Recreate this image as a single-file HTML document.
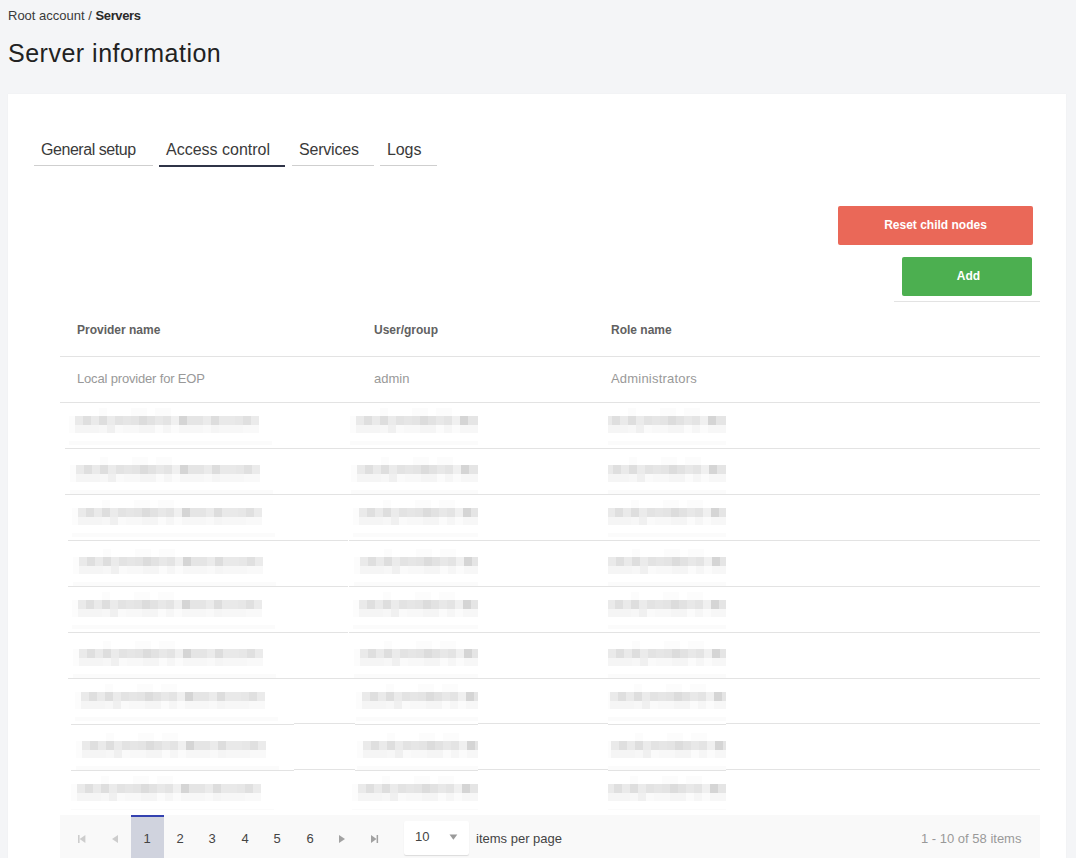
<!DOCTYPE html>
<html><head><meta charset="utf-8">
<style>
*{margin:0;padding:0;box-sizing:border-box}
html,body{width:1076px;height:858px;overflow:hidden;background:#f4f5f7;font-family:"Liberation Sans",sans-serif}
.a{position:absolute;white-space:nowrap}
i{position:absolute;display:block}
#card{position:absolute;left:8px;top:94px;width:1058px;height:800px;background:#fff;box-shadow:0 0 2px rgba(0,0,0,.035)}
.bc{left:8px;top:8px;font-size:13px;color:#3a3a3a}
.bc b{color:#2a2a2a}
.title{left:8px;top:39px;font-size:25px;letter-spacing:0.5px;color:#222}
.tab{font-size:16px;color:#3a3a3a;top:141px}
.ul{position:absolute;top:165px;height:1px;background:#cfcfcf}
.btn{position:absolute;border-radius:2px;color:#fff;font-size:12px;font-weight:bold;text-align:center}
.hl{position:absolute;height:1px;background:#e3e3e3}
.th{font-size:12px;font-weight:bold;color:#616161;top:323px}
.td{font-size:13px;color:#999;top:371px}
.pg{position:absolute;left:60px;top:815px;width:980px;height:50px;background:#f9f9f9}
.pn{font-size:13px;color:#444;top:831px;width:32px;text-align:center}
</style></head><body>
<div class="a bc">Root account / <b style="letter-spacing:-0.35px">Servers</b></div>
<div class="a title">Server information</div>
<div id="card"></div>
<div class="a tab" style="left:41px;letter-spacing:-0.45px">General setup</div>
<div class="a tab" style="left:166px">Access control</div>
<div class="a tab" style="left:299px;letter-spacing:-0.2px">Services</div>
<div class="a tab" style="left:387px;letter-spacing:-0.1px">Logs</div>
<i class="ul" style="left:34px;width:119px"></i>
<i class="ul" style="left:159px;width:126px;height:2px;background:#2f3447"></i>
<i class="ul" style="left:292px;width:82px"></i>
<i class="ul" style="left:380px;width:57px"></i>
<div class="btn" style="left:838px;top:206px;width:195px;height:39px;line-height:39px;background:#ea6858">Reset child nodes</div>
<div class="btn" style="left:902px;top:257px;width:130px;height:39px;line-height:39px;padding-left:3px;background:#4caf50">Add</div>
<i class="hl" style="left:894px;top:301px;width:146px"></i>
<div class="a th" style="left:77px">Provider name</div>
<div class="a th" style="left:374px">User/group</div>
<div class="a th" style="left:611px">Role name</div>
<i class="hl" style="left:60px;top:356px;width:980px"></i>
<div class="a td" style="left:77px;letter-spacing:-0.17px">Local provider for EOP</div>
<div class="a td" style="left:374px">admin</div>
<div class="a td" style="left:611px;letter-spacing:0.2px">Administrators</div>
<i class="hl" style="left:60px;top:402px;width:980px"></i>
<i class="hl" style="left:65px;top:448px;width:975px"></i>
<i class="hl" style="left:65px;top:494px;width:975px"></i>
<i class="hl" style="left:68px;top:540px;width:972px"></i>
<i class="hl" style="left:68px;top:586px;width:972px"></i>
<i class="hl" style="left:68px;top:632px;width:972px"></i>
<i class="hl" style="left:68px;top:678px;width:972px"></i>
<i class="hl" style="left:60px;top:723px;width:980px"></i><i style="left:60px;top:723px;width:234px;height:1px;background:#fff"></i><i style="left:355px;top:723px;width:123px;height:1px;background:#fff"></i><i style="left:608px;top:723px;width:118px;height:1px;background:#fff"></i><i class="hl" style="left:71px;top:724px;width:223px"></i><i class="hl" style="left:355px;top:724px;width:123px"></i><i class="hl" style="left:608px;top:724px;width:118px"></i>
<i class="hl" style="left:60px;top:769px;width:980px"></i><i style="left:60px;top:769px;width:234px;height:1px;background:#fff"></i><i style="left:355px;top:769px;width:123px;height:1px;background:#fff"></i><i style="left:608px;top:769px;width:118px;height:1px;background:#fff"></i><i class="hl" style="left:71px;top:770px;width:223px"></i><i class="hl" style="left:355px;top:770px;width:123px"></i><i class="hl" style="left:608px;top:770px;width:118px"></i>
<i style="left:75px;top:416px;width:8px;height:9px;background:#eaeaea"></i><i style="left:75px;top:425px;width:8px;height:8px;background:#f5f5f5"></i><i style="left:83px;top:416px;width:8px;height:9px;background:#dfdfdf"></i><i style="left:83px;top:425px;width:8px;height:8px;background:#f5f5f5"></i><i style="left:91px;top:416px;width:8px;height:9px;background:#eaeaea"></i><i style="left:91px;top:425px;width:8px;height:8px;background:#f5f5f5"></i><i style="left:99px;top:416px;width:8px;height:9px;background:#dedede"></i><i style="left:99px;top:425px;width:8px;height:8px;background:#f7f7f7"></i><i style="left:107px;top:416px;width:8px;height:9px;background:#ebebeb"></i><i style="left:107px;top:425px;width:8px;height:8px;background:#f0f0f0"></i><i style="left:115px;top:416px;width:8px;height:9px;background:#e3e3e3"></i><i style="left:115px;top:425px;width:8px;height:8px;background:#fafafa"></i><i style="left:123px;top:416px;width:8px;height:9px;background:#e6e6e6"></i><i style="left:123px;top:425px;width:8px;height:8px;background:#f8f8f8"></i><i style="left:131px;top:416px;width:8px;height:9px;background:#e4e4e4"></i><i style="left:131px;top:425px;width:8px;height:8px;background:#f8f8f8"></i><i style="left:139px;top:416px;width:8px;height:9px;background:#dcdcdc"></i><i style="left:139px;top:425px;width:8px;height:8px;background:#f5f5f5"></i><i style="left:147px;top:416px;width:8px;height:9px;background:#e2e2e2"></i><i style="left:147px;top:425px;width:8px;height:8px;background:#f5f5f5"></i><i style="left:155px;top:416px;width:8px;height:9px;background:#e8e8e8"></i><i style="left:155px;top:425px;width:8px;height:8px;background:#fbfbfb"></i><i style="left:163px;top:416px;width:8px;height:9px;background:#e4e4e4"></i><i style="left:163px;top:425px;width:8px;height:8px;background:#f6f6f6"></i><i style="left:171px;top:416px;width:8px;height:9px;background:#f0f0f0"></i><i style="left:171px;top:425px;width:8px;height:8px;background:#fbfbfb"></i><i style="left:179px;top:416px;width:8px;height:9px;background:#d5d5d5"></i><i style="left:179px;top:425px;width:8px;height:8px;background:#f7f7f7"></i><i style="left:187px;top:416px;width:8px;height:9px;background:#e5e5e5"></i><i style="left:187px;top:425px;width:8px;height:8px;background:#f7f7f7"></i><i style="left:195px;top:416px;width:8px;height:9px;background:#e5e5e5"></i><i style="left:195px;top:425px;width:8px;height:8px;background:#f7f7f7"></i><i style="left:203px;top:416px;width:8px;height:9px;background:#ebebeb"></i><i style="left:203px;top:425px;width:8px;height:8px;background:#f9f9f9"></i><i style="left:211px;top:416px;width:8px;height:9px;background:#dddddd"></i><i style="left:211px;top:425px;width:8px;height:8px;background:#f5f5f5"></i><i style="left:219px;top:416px;width:8px;height:9px;background:#e9e9e9"></i><i style="left:219px;top:425px;width:8px;height:8px;background:#f7f7f7"></i><i style="left:227px;top:416px;width:8px;height:9px;background:#e9e9e9"></i><i style="left:227px;top:425px;width:8px;height:8px;background:#f7f7f7"></i><i style="left:235px;top:416px;width:8px;height:9px;background:#e7e7e7"></i><i style="left:235px;top:425px;width:8px;height:8px;background:#f7f7f7"></i><i style="left:243px;top:416px;width:8px;height:9px;background:#e0e0e0"></i><i style="left:243px;top:425px;width:8px;height:8px;background:#f9f9f9"></i><i style="left:251px;top:416px;width:8px;height:9px;background:#ebebeb"></i><i style="left:251px;top:425px;width:8px;height:8px;background:#f9f9f9"></i><i style="left:99px;top:408px;width:8px;height:8px;background:#fcfcfc"></i><i style="left:131px;top:408px;width:8px;height:8px;background:#fcfcfc"></i><i style="left:139px;top:408px;width:8px;height:8px;background:#fcfcfc"></i><i style="left:155px;top:408px;width:8px;height:8px;background:#fcfcfc"></i><i style="left:163px;top:408px;width:8px;height:8px;background:#fcfcfc"></i><i style="left:69px;top:416px;width:6px;height:17px;background:#fcfcfc"></i><i style="left:69px;top:441px;width:203px;height:4px;background:#fbfbfb"></i><div style="position:absolute;left:348px;top:408px;width:130px;height:40px;overflow:hidden"><div style="position:absolute;left:-348px;top:-408px"><i style="left:356px;top:416px;width:8px;height:9px;background:#eaeaea"></i><i style="left:356px;top:425px;width:8px;height:8px;background:#f5f5f5"></i><i style="left:364px;top:416px;width:8px;height:9px;background:#dfdfdf"></i><i style="left:364px;top:425px;width:8px;height:8px;background:#f5f5f5"></i><i style="left:372px;top:416px;width:8px;height:9px;background:#eaeaea"></i><i style="left:372px;top:425px;width:8px;height:8px;background:#f5f5f5"></i><i style="left:380px;top:416px;width:8px;height:9px;background:#dedede"></i><i style="left:380px;top:425px;width:8px;height:8px;background:#f7f7f7"></i><i style="left:388px;top:416px;width:8px;height:9px;background:#ebebeb"></i><i style="left:388px;top:425px;width:8px;height:8px;background:#f0f0f0"></i><i style="left:396px;top:416px;width:8px;height:9px;background:#e3e3e3"></i><i style="left:396px;top:425px;width:8px;height:8px;background:#fafafa"></i><i style="left:404px;top:416px;width:8px;height:9px;background:#e6e6e6"></i><i style="left:404px;top:425px;width:8px;height:8px;background:#f8f8f8"></i><i style="left:412px;top:416px;width:8px;height:9px;background:#e4e4e4"></i><i style="left:412px;top:425px;width:8px;height:8px;background:#f8f8f8"></i><i style="left:420px;top:416px;width:8px;height:9px;background:#dcdcdc"></i><i style="left:420px;top:425px;width:8px;height:8px;background:#f5f5f5"></i><i style="left:428px;top:416px;width:8px;height:9px;background:#e2e2e2"></i><i style="left:428px;top:425px;width:8px;height:8px;background:#f5f5f5"></i><i style="left:436px;top:416px;width:8px;height:9px;background:#e8e8e8"></i><i style="left:436px;top:425px;width:8px;height:8px;background:#fbfbfb"></i><i style="left:444px;top:416px;width:8px;height:9px;background:#e4e4e4"></i><i style="left:444px;top:425px;width:8px;height:8px;background:#f6f6f6"></i><i style="left:452px;top:416px;width:8px;height:9px;background:#f0f0f0"></i><i style="left:452px;top:425px;width:8px;height:8px;background:#fbfbfb"></i><i style="left:460px;top:416px;width:8px;height:9px;background:#d5d5d5"></i><i style="left:460px;top:425px;width:8px;height:8px;background:#f7f7f7"></i><i style="left:468px;top:416px;width:8px;height:9px;background:#e5e5e5"></i><i style="left:468px;top:425px;width:8px;height:8px;background:#f7f7f7"></i><i style="left:476px;top:416px;width:8px;height:9px;background:#e5e5e5"></i><i style="left:476px;top:425px;width:8px;height:8px;background:#f7f7f7"></i><i style="left:380px;top:408px;width:8px;height:8px;background:#fcfcfc"></i><i style="left:412px;top:408px;width:8px;height:8px;background:#fcfcfc"></i><i style="left:420px;top:408px;width:8px;height:8px;background:#fcfcfc"></i><i style="left:436px;top:408px;width:8px;height:8px;background:#fcfcfc"></i><i style="left:444px;top:408px;width:8px;height:8px;background:#fcfcfc"></i><i style="left:350px;top:416px;width:6px;height:17px;background:#fcfcfc"></i><i style="left:350px;top:441px;width:200px;height:4px;background:#fbfbfb"></i></div></div><div style="position:absolute;left:608px;top:408px;width:118px;height:40px;overflow:hidden"><div style="position:absolute;left:-608px;top:-408px"><i style="left:604px;top:416px;width:8px;height:9px;background:#eaeaea"></i><i style="left:604px;top:425px;width:8px;height:8px;background:#f5f5f5"></i><i style="left:612px;top:416px;width:8px;height:9px;background:#dfdfdf"></i><i style="left:612px;top:425px;width:8px;height:8px;background:#f5f5f5"></i><i style="left:620px;top:416px;width:8px;height:9px;background:#eaeaea"></i><i style="left:620px;top:425px;width:8px;height:8px;background:#f5f5f5"></i><i style="left:628px;top:416px;width:8px;height:9px;background:#dedede"></i><i style="left:628px;top:425px;width:8px;height:8px;background:#f7f7f7"></i><i style="left:636px;top:416px;width:8px;height:9px;background:#ebebeb"></i><i style="left:636px;top:425px;width:8px;height:8px;background:#f0f0f0"></i><i style="left:644px;top:416px;width:8px;height:9px;background:#e3e3e3"></i><i style="left:644px;top:425px;width:8px;height:8px;background:#fafafa"></i><i style="left:652px;top:416px;width:8px;height:9px;background:#e6e6e6"></i><i style="left:652px;top:425px;width:8px;height:8px;background:#f8f8f8"></i><i style="left:660px;top:416px;width:8px;height:9px;background:#e4e4e4"></i><i style="left:660px;top:425px;width:8px;height:8px;background:#f8f8f8"></i><i style="left:668px;top:416px;width:8px;height:9px;background:#dcdcdc"></i><i style="left:668px;top:425px;width:8px;height:8px;background:#f5f5f5"></i><i style="left:676px;top:416px;width:8px;height:9px;background:#e2e2e2"></i><i style="left:676px;top:425px;width:8px;height:8px;background:#f5f5f5"></i><i style="left:684px;top:416px;width:8px;height:9px;background:#e8e8e8"></i><i style="left:684px;top:425px;width:8px;height:8px;background:#fbfbfb"></i><i style="left:692px;top:416px;width:8px;height:9px;background:#e4e4e4"></i><i style="left:692px;top:425px;width:8px;height:8px;background:#f6f6f6"></i><i style="left:700px;top:416px;width:8px;height:9px;background:#f0f0f0"></i><i style="left:700px;top:425px;width:8px;height:8px;background:#fbfbfb"></i><i style="left:708px;top:416px;width:8px;height:9px;background:#d5d5d5"></i><i style="left:708px;top:425px;width:8px;height:8px;background:#f7f7f7"></i><i style="left:716px;top:416px;width:8px;height:9px;background:#e5e5e5"></i><i style="left:716px;top:425px;width:8px;height:8px;background:#f7f7f7"></i><i style="left:724px;top:416px;width:8px;height:9px;background:#e5e5e5"></i><i style="left:724px;top:425px;width:8px;height:8px;background:#f7f7f7"></i><i style="left:628px;top:408px;width:8px;height:8px;background:#fcfcfc"></i><i style="left:660px;top:408px;width:8px;height:8px;background:#fcfcfc"></i><i style="left:668px;top:408px;width:8px;height:8px;background:#fcfcfc"></i><i style="left:684px;top:408px;width:8px;height:8px;background:#fcfcfc"></i><i style="left:692px;top:408px;width:8px;height:8px;background:#fcfcfc"></i><i style="left:598px;top:416px;width:6px;height:17px;background:#fcfcfc"></i><i style="left:598px;top:441px;width:200px;height:4px;background:#fbfbfb"></i></div></div><i style="left:76px;top:465px;width:8px;height:9px;background:#eaeaea"></i><i style="left:76px;top:474px;width:8px;height:8px;background:#f5f5f5"></i><i style="left:84px;top:465px;width:8px;height:9px;background:#dfdfdf"></i><i style="left:84px;top:474px;width:8px;height:8px;background:#f5f5f5"></i><i style="left:92px;top:465px;width:8px;height:9px;background:#eaeaea"></i><i style="left:92px;top:474px;width:8px;height:8px;background:#f5f5f5"></i><i style="left:100px;top:465px;width:8px;height:9px;background:#dedede"></i><i style="left:100px;top:474px;width:8px;height:8px;background:#f7f7f7"></i><i style="left:108px;top:465px;width:8px;height:9px;background:#ebebeb"></i><i style="left:108px;top:474px;width:8px;height:8px;background:#f0f0f0"></i><i style="left:116px;top:465px;width:8px;height:9px;background:#e3e3e3"></i><i style="left:116px;top:474px;width:8px;height:8px;background:#fafafa"></i><i style="left:124px;top:465px;width:8px;height:9px;background:#e6e6e6"></i><i style="left:124px;top:474px;width:8px;height:8px;background:#f8f8f8"></i><i style="left:132px;top:465px;width:8px;height:9px;background:#e4e4e4"></i><i style="left:132px;top:474px;width:8px;height:8px;background:#f8f8f8"></i><i style="left:140px;top:465px;width:8px;height:9px;background:#dcdcdc"></i><i style="left:140px;top:474px;width:8px;height:8px;background:#f5f5f5"></i><i style="left:148px;top:465px;width:8px;height:9px;background:#e2e2e2"></i><i style="left:148px;top:474px;width:8px;height:8px;background:#f5f5f5"></i><i style="left:156px;top:465px;width:8px;height:9px;background:#e8e8e8"></i><i style="left:156px;top:474px;width:8px;height:8px;background:#fbfbfb"></i><i style="left:164px;top:465px;width:8px;height:9px;background:#e4e4e4"></i><i style="left:164px;top:474px;width:8px;height:8px;background:#f6f6f6"></i><i style="left:172px;top:465px;width:8px;height:9px;background:#f0f0f0"></i><i style="left:172px;top:474px;width:8px;height:8px;background:#fbfbfb"></i><i style="left:180px;top:465px;width:8px;height:9px;background:#d5d5d5"></i><i style="left:180px;top:474px;width:8px;height:8px;background:#f7f7f7"></i><i style="left:188px;top:465px;width:8px;height:9px;background:#e5e5e5"></i><i style="left:188px;top:474px;width:8px;height:8px;background:#f7f7f7"></i><i style="left:196px;top:465px;width:8px;height:9px;background:#e5e5e5"></i><i style="left:196px;top:474px;width:8px;height:8px;background:#f7f7f7"></i><i style="left:204px;top:465px;width:8px;height:9px;background:#ebebeb"></i><i style="left:204px;top:474px;width:8px;height:8px;background:#f9f9f9"></i><i style="left:212px;top:465px;width:8px;height:9px;background:#dddddd"></i><i style="left:212px;top:474px;width:8px;height:8px;background:#f5f5f5"></i><i style="left:220px;top:465px;width:8px;height:9px;background:#e9e9e9"></i><i style="left:220px;top:474px;width:8px;height:8px;background:#f7f7f7"></i><i style="left:228px;top:465px;width:8px;height:9px;background:#e9e9e9"></i><i style="left:228px;top:474px;width:8px;height:8px;background:#f7f7f7"></i><i style="left:236px;top:465px;width:8px;height:9px;background:#e7e7e7"></i><i style="left:236px;top:474px;width:8px;height:8px;background:#f7f7f7"></i><i style="left:244px;top:465px;width:8px;height:9px;background:#e0e0e0"></i><i style="left:244px;top:474px;width:8px;height:8px;background:#f9f9f9"></i><i style="left:252px;top:465px;width:8px;height:9px;background:#ebebeb"></i><i style="left:252px;top:474px;width:8px;height:8px;background:#f9f9f9"></i><i style="left:100px;top:457px;width:8px;height:8px;background:#fcfcfc"></i><i style="left:132px;top:457px;width:8px;height:8px;background:#fcfcfc"></i><i style="left:140px;top:457px;width:8px;height:8px;background:#fcfcfc"></i><i style="left:156px;top:457px;width:8px;height:8px;background:#fcfcfc"></i><i style="left:164px;top:457px;width:8px;height:8px;background:#fcfcfc"></i><i style="left:70px;top:465px;width:6px;height:17px;background:#fcfcfc"></i><i style="left:70px;top:490px;width:203px;height:4px;background:#fbfbfb"></i><div style="position:absolute;left:349px;top:457px;width:129px;height:40px;overflow:hidden"><div style="position:absolute;left:-349px;top:-457px"><i style="left:357px;top:465px;width:8px;height:9px;background:#eaeaea"></i><i style="left:357px;top:474px;width:8px;height:8px;background:#f5f5f5"></i><i style="left:365px;top:465px;width:8px;height:9px;background:#dfdfdf"></i><i style="left:365px;top:474px;width:8px;height:8px;background:#f5f5f5"></i><i style="left:373px;top:465px;width:8px;height:9px;background:#eaeaea"></i><i style="left:373px;top:474px;width:8px;height:8px;background:#f5f5f5"></i><i style="left:381px;top:465px;width:8px;height:9px;background:#dedede"></i><i style="left:381px;top:474px;width:8px;height:8px;background:#f7f7f7"></i><i style="left:389px;top:465px;width:8px;height:9px;background:#ebebeb"></i><i style="left:389px;top:474px;width:8px;height:8px;background:#f0f0f0"></i><i style="left:397px;top:465px;width:8px;height:9px;background:#e3e3e3"></i><i style="left:397px;top:474px;width:8px;height:8px;background:#fafafa"></i><i style="left:405px;top:465px;width:8px;height:9px;background:#e6e6e6"></i><i style="left:405px;top:474px;width:8px;height:8px;background:#f8f8f8"></i><i style="left:413px;top:465px;width:8px;height:9px;background:#e4e4e4"></i><i style="left:413px;top:474px;width:8px;height:8px;background:#f8f8f8"></i><i style="left:421px;top:465px;width:8px;height:9px;background:#dcdcdc"></i><i style="left:421px;top:474px;width:8px;height:8px;background:#f5f5f5"></i><i style="left:429px;top:465px;width:8px;height:9px;background:#e2e2e2"></i><i style="left:429px;top:474px;width:8px;height:8px;background:#f5f5f5"></i><i style="left:437px;top:465px;width:8px;height:9px;background:#e8e8e8"></i><i style="left:437px;top:474px;width:8px;height:8px;background:#fbfbfb"></i><i style="left:445px;top:465px;width:8px;height:9px;background:#e4e4e4"></i><i style="left:445px;top:474px;width:8px;height:8px;background:#f6f6f6"></i><i style="left:453px;top:465px;width:8px;height:9px;background:#f0f0f0"></i><i style="left:453px;top:474px;width:8px;height:8px;background:#fbfbfb"></i><i style="left:461px;top:465px;width:8px;height:9px;background:#d5d5d5"></i><i style="left:461px;top:474px;width:8px;height:8px;background:#f7f7f7"></i><i style="left:469px;top:465px;width:8px;height:9px;background:#e5e5e5"></i><i style="left:469px;top:474px;width:8px;height:8px;background:#f7f7f7"></i><i style="left:477px;top:465px;width:8px;height:9px;background:#e5e5e5"></i><i style="left:477px;top:474px;width:8px;height:8px;background:#f7f7f7"></i><i style="left:381px;top:457px;width:8px;height:8px;background:#fcfcfc"></i><i style="left:413px;top:457px;width:8px;height:8px;background:#fcfcfc"></i><i style="left:421px;top:457px;width:8px;height:8px;background:#fcfcfc"></i><i style="left:437px;top:457px;width:8px;height:8px;background:#fcfcfc"></i><i style="left:445px;top:457px;width:8px;height:8px;background:#fcfcfc"></i><i style="left:351px;top:465px;width:6px;height:17px;background:#fcfcfc"></i><i style="left:351px;top:490px;width:200px;height:4px;background:#fbfbfb"></i></div></div><div style="position:absolute;left:608px;top:457px;width:118px;height:40px;overflow:hidden"><div style="position:absolute;left:-608px;top:-457px"><i style="left:605px;top:465px;width:8px;height:9px;background:#eaeaea"></i><i style="left:605px;top:474px;width:8px;height:8px;background:#f5f5f5"></i><i style="left:613px;top:465px;width:8px;height:9px;background:#dfdfdf"></i><i style="left:613px;top:474px;width:8px;height:8px;background:#f5f5f5"></i><i style="left:621px;top:465px;width:8px;height:9px;background:#eaeaea"></i><i style="left:621px;top:474px;width:8px;height:8px;background:#f5f5f5"></i><i style="left:629px;top:465px;width:8px;height:9px;background:#dedede"></i><i style="left:629px;top:474px;width:8px;height:8px;background:#f7f7f7"></i><i style="left:637px;top:465px;width:8px;height:9px;background:#ebebeb"></i><i style="left:637px;top:474px;width:8px;height:8px;background:#f0f0f0"></i><i style="left:645px;top:465px;width:8px;height:9px;background:#e3e3e3"></i><i style="left:645px;top:474px;width:8px;height:8px;background:#fafafa"></i><i style="left:653px;top:465px;width:8px;height:9px;background:#e6e6e6"></i><i style="left:653px;top:474px;width:8px;height:8px;background:#f8f8f8"></i><i style="left:661px;top:465px;width:8px;height:9px;background:#e4e4e4"></i><i style="left:661px;top:474px;width:8px;height:8px;background:#f8f8f8"></i><i style="left:669px;top:465px;width:8px;height:9px;background:#dcdcdc"></i><i style="left:669px;top:474px;width:8px;height:8px;background:#f5f5f5"></i><i style="left:677px;top:465px;width:8px;height:9px;background:#e2e2e2"></i><i style="left:677px;top:474px;width:8px;height:8px;background:#f5f5f5"></i><i style="left:685px;top:465px;width:8px;height:9px;background:#e8e8e8"></i><i style="left:685px;top:474px;width:8px;height:8px;background:#fbfbfb"></i><i style="left:693px;top:465px;width:8px;height:9px;background:#e4e4e4"></i><i style="left:693px;top:474px;width:8px;height:8px;background:#f6f6f6"></i><i style="left:701px;top:465px;width:8px;height:9px;background:#f0f0f0"></i><i style="left:701px;top:474px;width:8px;height:8px;background:#fbfbfb"></i><i style="left:709px;top:465px;width:8px;height:9px;background:#d5d5d5"></i><i style="left:709px;top:474px;width:8px;height:8px;background:#f7f7f7"></i><i style="left:717px;top:465px;width:8px;height:9px;background:#e5e5e5"></i><i style="left:717px;top:474px;width:8px;height:8px;background:#f7f7f7"></i><i style="left:725px;top:465px;width:8px;height:9px;background:#e5e5e5"></i><i style="left:725px;top:474px;width:8px;height:8px;background:#f7f7f7"></i><i style="left:629px;top:457px;width:8px;height:8px;background:#fcfcfc"></i><i style="left:661px;top:457px;width:8px;height:8px;background:#fcfcfc"></i><i style="left:669px;top:457px;width:8px;height:8px;background:#fcfcfc"></i><i style="left:685px;top:457px;width:8px;height:8px;background:#fcfcfc"></i><i style="left:693px;top:457px;width:8px;height:8px;background:#fcfcfc"></i><i style="left:599px;top:465px;width:6px;height:17px;background:#fcfcfc"></i><i style="left:599px;top:490px;width:200px;height:4px;background:#fbfbfb"></i></div></div><i style="left:78px;top:508px;width:8px;height:9px;background:#eaeaea"></i><i style="left:78px;top:517px;width:8px;height:8px;background:#f5f5f5"></i><i style="left:86px;top:508px;width:8px;height:9px;background:#dfdfdf"></i><i style="left:86px;top:517px;width:8px;height:8px;background:#f5f5f5"></i><i style="left:94px;top:508px;width:8px;height:9px;background:#eaeaea"></i><i style="left:94px;top:517px;width:8px;height:8px;background:#f5f5f5"></i><i style="left:102px;top:508px;width:8px;height:9px;background:#dedede"></i><i style="left:102px;top:517px;width:8px;height:8px;background:#f7f7f7"></i><i style="left:110px;top:508px;width:8px;height:9px;background:#ebebeb"></i><i style="left:110px;top:517px;width:8px;height:8px;background:#f0f0f0"></i><i style="left:118px;top:508px;width:8px;height:9px;background:#e3e3e3"></i><i style="left:118px;top:517px;width:8px;height:8px;background:#fafafa"></i><i style="left:126px;top:508px;width:8px;height:9px;background:#e6e6e6"></i><i style="left:126px;top:517px;width:8px;height:8px;background:#f8f8f8"></i><i style="left:134px;top:508px;width:8px;height:9px;background:#e4e4e4"></i><i style="left:134px;top:517px;width:8px;height:8px;background:#f8f8f8"></i><i style="left:142px;top:508px;width:8px;height:9px;background:#dcdcdc"></i><i style="left:142px;top:517px;width:8px;height:8px;background:#f5f5f5"></i><i style="left:150px;top:508px;width:8px;height:9px;background:#e2e2e2"></i><i style="left:150px;top:517px;width:8px;height:8px;background:#f5f5f5"></i><i style="left:158px;top:508px;width:8px;height:9px;background:#e8e8e8"></i><i style="left:158px;top:517px;width:8px;height:8px;background:#fbfbfb"></i><i style="left:166px;top:508px;width:8px;height:9px;background:#e4e4e4"></i><i style="left:166px;top:517px;width:8px;height:8px;background:#f6f6f6"></i><i style="left:174px;top:508px;width:8px;height:9px;background:#f0f0f0"></i><i style="left:174px;top:517px;width:8px;height:8px;background:#fbfbfb"></i><i style="left:182px;top:508px;width:8px;height:9px;background:#d5d5d5"></i><i style="left:182px;top:517px;width:8px;height:8px;background:#f7f7f7"></i><i style="left:190px;top:508px;width:8px;height:9px;background:#e5e5e5"></i><i style="left:190px;top:517px;width:8px;height:8px;background:#f7f7f7"></i><i style="left:198px;top:508px;width:8px;height:9px;background:#e5e5e5"></i><i style="left:198px;top:517px;width:8px;height:8px;background:#f7f7f7"></i><i style="left:206px;top:508px;width:8px;height:9px;background:#ebebeb"></i><i style="left:206px;top:517px;width:8px;height:8px;background:#f9f9f9"></i><i style="left:214px;top:508px;width:8px;height:9px;background:#dddddd"></i><i style="left:214px;top:517px;width:8px;height:8px;background:#f5f5f5"></i><i style="left:222px;top:508px;width:8px;height:9px;background:#e9e9e9"></i><i style="left:222px;top:517px;width:8px;height:8px;background:#f7f7f7"></i><i style="left:230px;top:508px;width:8px;height:9px;background:#e9e9e9"></i><i style="left:230px;top:517px;width:8px;height:8px;background:#f7f7f7"></i><i style="left:238px;top:508px;width:8px;height:9px;background:#e7e7e7"></i><i style="left:238px;top:517px;width:8px;height:8px;background:#f7f7f7"></i><i style="left:246px;top:508px;width:8px;height:9px;background:#e0e0e0"></i><i style="left:246px;top:517px;width:8px;height:8px;background:#f9f9f9"></i><i style="left:254px;top:508px;width:8px;height:9px;background:#ebebeb"></i><i style="left:254px;top:517px;width:8px;height:8px;background:#f9f9f9"></i><i style="left:102px;top:500px;width:8px;height:8px;background:#fcfcfc"></i><i style="left:134px;top:500px;width:8px;height:8px;background:#fcfcfc"></i><i style="left:142px;top:500px;width:8px;height:8px;background:#fcfcfc"></i><i style="left:158px;top:500px;width:8px;height:8px;background:#fcfcfc"></i><i style="left:166px;top:500px;width:8px;height:8px;background:#fcfcfc"></i><i style="left:72px;top:508px;width:6px;height:17px;background:#fcfcfc"></i><i style="left:72px;top:533px;width:203px;height:4px;background:#fbfbfb"></i><div style="position:absolute;left:351px;top:500px;width:127px;height:40px;overflow:hidden"><div style="position:absolute;left:-351px;top:-500px"><i style="left:359px;top:508px;width:8px;height:9px;background:#eaeaea"></i><i style="left:359px;top:517px;width:8px;height:8px;background:#f5f5f5"></i><i style="left:367px;top:508px;width:8px;height:9px;background:#dfdfdf"></i><i style="left:367px;top:517px;width:8px;height:8px;background:#f5f5f5"></i><i style="left:375px;top:508px;width:8px;height:9px;background:#eaeaea"></i><i style="left:375px;top:517px;width:8px;height:8px;background:#f5f5f5"></i><i style="left:383px;top:508px;width:8px;height:9px;background:#dedede"></i><i style="left:383px;top:517px;width:8px;height:8px;background:#f7f7f7"></i><i style="left:391px;top:508px;width:8px;height:9px;background:#ebebeb"></i><i style="left:391px;top:517px;width:8px;height:8px;background:#f0f0f0"></i><i style="left:399px;top:508px;width:8px;height:9px;background:#e3e3e3"></i><i style="left:399px;top:517px;width:8px;height:8px;background:#fafafa"></i><i style="left:407px;top:508px;width:8px;height:9px;background:#e6e6e6"></i><i style="left:407px;top:517px;width:8px;height:8px;background:#f8f8f8"></i><i style="left:415px;top:508px;width:8px;height:9px;background:#e4e4e4"></i><i style="left:415px;top:517px;width:8px;height:8px;background:#f8f8f8"></i><i style="left:423px;top:508px;width:8px;height:9px;background:#dcdcdc"></i><i style="left:423px;top:517px;width:8px;height:8px;background:#f5f5f5"></i><i style="left:431px;top:508px;width:8px;height:9px;background:#e2e2e2"></i><i style="left:431px;top:517px;width:8px;height:8px;background:#f5f5f5"></i><i style="left:439px;top:508px;width:8px;height:9px;background:#e8e8e8"></i><i style="left:439px;top:517px;width:8px;height:8px;background:#fbfbfb"></i><i style="left:447px;top:508px;width:8px;height:9px;background:#e4e4e4"></i><i style="left:447px;top:517px;width:8px;height:8px;background:#f6f6f6"></i><i style="left:455px;top:508px;width:8px;height:9px;background:#f0f0f0"></i><i style="left:455px;top:517px;width:8px;height:8px;background:#fbfbfb"></i><i style="left:463px;top:508px;width:8px;height:9px;background:#d5d5d5"></i><i style="left:463px;top:517px;width:8px;height:8px;background:#f7f7f7"></i><i style="left:471px;top:508px;width:8px;height:9px;background:#e5e5e5"></i><i style="left:471px;top:517px;width:8px;height:8px;background:#f7f7f7"></i><i style="left:479px;top:508px;width:8px;height:9px;background:#e5e5e5"></i><i style="left:479px;top:517px;width:8px;height:8px;background:#f7f7f7"></i><i style="left:383px;top:500px;width:8px;height:8px;background:#fcfcfc"></i><i style="left:415px;top:500px;width:8px;height:8px;background:#fcfcfc"></i><i style="left:423px;top:500px;width:8px;height:8px;background:#fcfcfc"></i><i style="left:439px;top:500px;width:8px;height:8px;background:#fcfcfc"></i><i style="left:447px;top:500px;width:8px;height:8px;background:#fcfcfc"></i><i style="left:353px;top:508px;width:6px;height:17px;background:#fcfcfc"></i><i style="left:353px;top:533px;width:200px;height:4px;background:#fbfbfb"></i></div></div><div style="position:absolute;left:608px;top:500px;width:118px;height:40px;overflow:hidden"><div style="position:absolute;left:-608px;top:-500px"><i style="left:607px;top:508px;width:8px;height:9px;background:#eaeaea"></i><i style="left:607px;top:517px;width:8px;height:8px;background:#f5f5f5"></i><i style="left:615px;top:508px;width:8px;height:9px;background:#dfdfdf"></i><i style="left:615px;top:517px;width:8px;height:8px;background:#f5f5f5"></i><i style="left:623px;top:508px;width:8px;height:9px;background:#eaeaea"></i><i style="left:623px;top:517px;width:8px;height:8px;background:#f5f5f5"></i><i style="left:631px;top:508px;width:8px;height:9px;background:#dedede"></i><i style="left:631px;top:517px;width:8px;height:8px;background:#f7f7f7"></i><i style="left:639px;top:508px;width:8px;height:9px;background:#ebebeb"></i><i style="left:639px;top:517px;width:8px;height:8px;background:#f0f0f0"></i><i style="left:647px;top:508px;width:8px;height:9px;background:#e3e3e3"></i><i style="left:647px;top:517px;width:8px;height:8px;background:#fafafa"></i><i style="left:655px;top:508px;width:8px;height:9px;background:#e6e6e6"></i><i style="left:655px;top:517px;width:8px;height:8px;background:#f8f8f8"></i><i style="left:663px;top:508px;width:8px;height:9px;background:#e4e4e4"></i><i style="left:663px;top:517px;width:8px;height:8px;background:#f8f8f8"></i><i style="left:671px;top:508px;width:8px;height:9px;background:#dcdcdc"></i><i style="left:671px;top:517px;width:8px;height:8px;background:#f5f5f5"></i><i style="left:679px;top:508px;width:8px;height:9px;background:#e2e2e2"></i><i style="left:679px;top:517px;width:8px;height:8px;background:#f5f5f5"></i><i style="left:687px;top:508px;width:8px;height:9px;background:#e8e8e8"></i><i style="left:687px;top:517px;width:8px;height:8px;background:#fbfbfb"></i><i style="left:695px;top:508px;width:8px;height:9px;background:#e4e4e4"></i><i style="left:695px;top:517px;width:8px;height:8px;background:#f6f6f6"></i><i style="left:703px;top:508px;width:8px;height:9px;background:#f0f0f0"></i><i style="left:703px;top:517px;width:8px;height:8px;background:#fbfbfb"></i><i style="left:711px;top:508px;width:8px;height:9px;background:#d5d5d5"></i><i style="left:711px;top:517px;width:8px;height:8px;background:#f7f7f7"></i><i style="left:719px;top:508px;width:8px;height:9px;background:#e5e5e5"></i><i style="left:719px;top:517px;width:8px;height:8px;background:#f7f7f7"></i><i style="left:727px;top:508px;width:8px;height:9px;background:#e5e5e5"></i><i style="left:727px;top:517px;width:8px;height:8px;background:#f7f7f7"></i><i style="left:631px;top:500px;width:8px;height:8px;background:#fcfcfc"></i><i style="left:663px;top:500px;width:8px;height:8px;background:#fcfcfc"></i><i style="left:671px;top:500px;width:8px;height:8px;background:#fcfcfc"></i><i style="left:687px;top:500px;width:8px;height:8px;background:#fcfcfc"></i><i style="left:695px;top:500px;width:8px;height:8px;background:#fcfcfc"></i><i style="left:601px;top:508px;width:6px;height:17px;background:#fcfcfc"></i><i style="left:601px;top:533px;width:200px;height:4px;background:#fbfbfb"></i></div></div><i style="left:79px;top:557px;width:8px;height:9px;background:#eaeaea"></i><i style="left:79px;top:566px;width:8px;height:8px;background:#f5f5f5"></i><i style="left:87px;top:557px;width:8px;height:9px;background:#dfdfdf"></i><i style="left:87px;top:566px;width:8px;height:8px;background:#f5f5f5"></i><i style="left:95px;top:557px;width:8px;height:9px;background:#eaeaea"></i><i style="left:95px;top:566px;width:8px;height:8px;background:#f5f5f5"></i><i style="left:103px;top:557px;width:8px;height:9px;background:#dedede"></i><i style="left:103px;top:566px;width:8px;height:8px;background:#f7f7f7"></i><i style="left:111px;top:557px;width:8px;height:9px;background:#ebebeb"></i><i style="left:111px;top:566px;width:8px;height:8px;background:#f0f0f0"></i><i style="left:119px;top:557px;width:8px;height:9px;background:#e3e3e3"></i><i style="left:119px;top:566px;width:8px;height:8px;background:#fafafa"></i><i style="left:127px;top:557px;width:8px;height:9px;background:#e6e6e6"></i><i style="left:127px;top:566px;width:8px;height:8px;background:#f8f8f8"></i><i style="left:135px;top:557px;width:8px;height:9px;background:#e4e4e4"></i><i style="left:135px;top:566px;width:8px;height:8px;background:#f8f8f8"></i><i style="left:143px;top:557px;width:8px;height:9px;background:#dcdcdc"></i><i style="left:143px;top:566px;width:8px;height:8px;background:#f5f5f5"></i><i style="left:151px;top:557px;width:8px;height:9px;background:#e2e2e2"></i><i style="left:151px;top:566px;width:8px;height:8px;background:#f5f5f5"></i><i style="left:159px;top:557px;width:8px;height:9px;background:#e8e8e8"></i><i style="left:159px;top:566px;width:8px;height:8px;background:#fbfbfb"></i><i style="left:167px;top:557px;width:8px;height:9px;background:#e4e4e4"></i><i style="left:167px;top:566px;width:8px;height:8px;background:#f6f6f6"></i><i style="left:175px;top:557px;width:8px;height:9px;background:#f0f0f0"></i><i style="left:175px;top:566px;width:8px;height:8px;background:#fbfbfb"></i><i style="left:183px;top:557px;width:8px;height:9px;background:#d5d5d5"></i><i style="left:183px;top:566px;width:8px;height:8px;background:#f7f7f7"></i><i style="left:191px;top:557px;width:8px;height:9px;background:#e5e5e5"></i><i style="left:191px;top:566px;width:8px;height:8px;background:#f7f7f7"></i><i style="left:199px;top:557px;width:8px;height:9px;background:#e5e5e5"></i><i style="left:199px;top:566px;width:8px;height:8px;background:#f7f7f7"></i><i style="left:207px;top:557px;width:8px;height:9px;background:#ebebeb"></i><i style="left:207px;top:566px;width:8px;height:8px;background:#f9f9f9"></i><i style="left:215px;top:557px;width:8px;height:9px;background:#dddddd"></i><i style="left:215px;top:566px;width:8px;height:8px;background:#f5f5f5"></i><i style="left:223px;top:557px;width:8px;height:9px;background:#e9e9e9"></i><i style="left:223px;top:566px;width:8px;height:8px;background:#f7f7f7"></i><i style="left:231px;top:557px;width:8px;height:9px;background:#e9e9e9"></i><i style="left:231px;top:566px;width:8px;height:8px;background:#f7f7f7"></i><i style="left:239px;top:557px;width:8px;height:9px;background:#e7e7e7"></i><i style="left:239px;top:566px;width:8px;height:8px;background:#f7f7f7"></i><i style="left:247px;top:557px;width:8px;height:9px;background:#e0e0e0"></i><i style="left:247px;top:566px;width:8px;height:8px;background:#f9f9f9"></i><i style="left:255px;top:557px;width:8px;height:9px;background:#ebebeb"></i><i style="left:255px;top:566px;width:8px;height:8px;background:#f9f9f9"></i><i style="left:103px;top:549px;width:8px;height:8px;background:#fcfcfc"></i><i style="left:135px;top:549px;width:8px;height:8px;background:#fcfcfc"></i><i style="left:143px;top:549px;width:8px;height:8px;background:#fcfcfc"></i><i style="left:159px;top:549px;width:8px;height:8px;background:#fcfcfc"></i><i style="left:167px;top:549px;width:8px;height:8px;background:#fcfcfc"></i><i style="left:73px;top:557px;width:6px;height:17px;background:#fcfcfc"></i><i style="left:73px;top:582px;width:203px;height:4px;background:#fbfbfb"></i><div style="position:absolute;left:352px;top:549px;width:126px;height:40px;overflow:hidden"><div style="position:absolute;left:-352px;top:-549px"><i style="left:360px;top:557px;width:8px;height:9px;background:#eaeaea"></i><i style="left:360px;top:566px;width:8px;height:8px;background:#f5f5f5"></i><i style="left:368px;top:557px;width:8px;height:9px;background:#dfdfdf"></i><i style="left:368px;top:566px;width:8px;height:8px;background:#f5f5f5"></i><i style="left:376px;top:557px;width:8px;height:9px;background:#eaeaea"></i><i style="left:376px;top:566px;width:8px;height:8px;background:#f5f5f5"></i><i style="left:384px;top:557px;width:8px;height:9px;background:#dedede"></i><i style="left:384px;top:566px;width:8px;height:8px;background:#f7f7f7"></i><i style="left:392px;top:557px;width:8px;height:9px;background:#ebebeb"></i><i style="left:392px;top:566px;width:8px;height:8px;background:#f0f0f0"></i><i style="left:400px;top:557px;width:8px;height:9px;background:#e3e3e3"></i><i style="left:400px;top:566px;width:8px;height:8px;background:#fafafa"></i><i style="left:408px;top:557px;width:8px;height:9px;background:#e6e6e6"></i><i style="left:408px;top:566px;width:8px;height:8px;background:#f8f8f8"></i><i style="left:416px;top:557px;width:8px;height:9px;background:#e4e4e4"></i><i style="left:416px;top:566px;width:8px;height:8px;background:#f8f8f8"></i><i style="left:424px;top:557px;width:8px;height:9px;background:#dcdcdc"></i><i style="left:424px;top:566px;width:8px;height:8px;background:#f5f5f5"></i><i style="left:432px;top:557px;width:8px;height:9px;background:#e2e2e2"></i><i style="left:432px;top:566px;width:8px;height:8px;background:#f5f5f5"></i><i style="left:440px;top:557px;width:8px;height:9px;background:#e8e8e8"></i><i style="left:440px;top:566px;width:8px;height:8px;background:#fbfbfb"></i><i style="left:448px;top:557px;width:8px;height:9px;background:#e4e4e4"></i><i style="left:448px;top:566px;width:8px;height:8px;background:#f6f6f6"></i><i style="left:456px;top:557px;width:8px;height:9px;background:#f0f0f0"></i><i style="left:456px;top:566px;width:8px;height:8px;background:#fbfbfb"></i><i style="left:464px;top:557px;width:8px;height:9px;background:#d5d5d5"></i><i style="left:464px;top:566px;width:8px;height:8px;background:#f7f7f7"></i><i style="left:472px;top:557px;width:8px;height:9px;background:#e5e5e5"></i><i style="left:472px;top:566px;width:8px;height:8px;background:#f7f7f7"></i><i style="left:480px;top:557px;width:8px;height:9px;background:#e5e5e5"></i><i style="left:480px;top:566px;width:8px;height:8px;background:#f7f7f7"></i><i style="left:384px;top:549px;width:8px;height:8px;background:#fcfcfc"></i><i style="left:416px;top:549px;width:8px;height:8px;background:#fcfcfc"></i><i style="left:424px;top:549px;width:8px;height:8px;background:#fcfcfc"></i><i style="left:440px;top:549px;width:8px;height:8px;background:#fcfcfc"></i><i style="left:448px;top:549px;width:8px;height:8px;background:#fcfcfc"></i><i style="left:354px;top:557px;width:6px;height:17px;background:#fcfcfc"></i><i style="left:354px;top:582px;width:200px;height:4px;background:#fbfbfb"></i></div></div><div style="position:absolute;left:608px;top:549px;width:118px;height:40px;overflow:hidden"><div style="position:absolute;left:-608px;top:-549px"><i style="left:608px;top:557px;width:8px;height:9px;background:#eaeaea"></i><i style="left:608px;top:566px;width:8px;height:8px;background:#f5f5f5"></i><i style="left:616px;top:557px;width:8px;height:9px;background:#dfdfdf"></i><i style="left:616px;top:566px;width:8px;height:8px;background:#f5f5f5"></i><i style="left:624px;top:557px;width:8px;height:9px;background:#eaeaea"></i><i style="left:624px;top:566px;width:8px;height:8px;background:#f5f5f5"></i><i style="left:632px;top:557px;width:8px;height:9px;background:#dedede"></i><i style="left:632px;top:566px;width:8px;height:8px;background:#f7f7f7"></i><i style="left:640px;top:557px;width:8px;height:9px;background:#ebebeb"></i><i style="left:640px;top:566px;width:8px;height:8px;background:#f0f0f0"></i><i style="left:648px;top:557px;width:8px;height:9px;background:#e3e3e3"></i><i style="left:648px;top:566px;width:8px;height:8px;background:#fafafa"></i><i style="left:656px;top:557px;width:8px;height:9px;background:#e6e6e6"></i><i style="left:656px;top:566px;width:8px;height:8px;background:#f8f8f8"></i><i style="left:664px;top:557px;width:8px;height:9px;background:#e4e4e4"></i><i style="left:664px;top:566px;width:8px;height:8px;background:#f8f8f8"></i><i style="left:672px;top:557px;width:8px;height:9px;background:#dcdcdc"></i><i style="left:672px;top:566px;width:8px;height:8px;background:#f5f5f5"></i><i style="left:680px;top:557px;width:8px;height:9px;background:#e2e2e2"></i><i style="left:680px;top:566px;width:8px;height:8px;background:#f5f5f5"></i><i style="left:688px;top:557px;width:8px;height:9px;background:#e8e8e8"></i><i style="left:688px;top:566px;width:8px;height:8px;background:#fbfbfb"></i><i style="left:696px;top:557px;width:8px;height:9px;background:#e4e4e4"></i><i style="left:696px;top:566px;width:8px;height:8px;background:#f6f6f6"></i><i style="left:704px;top:557px;width:8px;height:9px;background:#f0f0f0"></i><i style="left:704px;top:566px;width:8px;height:8px;background:#fbfbfb"></i><i style="left:712px;top:557px;width:8px;height:9px;background:#d5d5d5"></i><i style="left:712px;top:566px;width:8px;height:8px;background:#f7f7f7"></i><i style="left:720px;top:557px;width:8px;height:9px;background:#e5e5e5"></i><i style="left:720px;top:566px;width:8px;height:8px;background:#f7f7f7"></i><i style="left:728px;top:557px;width:8px;height:9px;background:#e5e5e5"></i><i style="left:728px;top:566px;width:8px;height:8px;background:#f7f7f7"></i><i style="left:632px;top:549px;width:8px;height:8px;background:#fcfcfc"></i><i style="left:664px;top:549px;width:8px;height:8px;background:#fcfcfc"></i><i style="left:672px;top:549px;width:8px;height:8px;background:#fcfcfc"></i><i style="left:688px;top:549px;width:8px;height:8px;background:#fcfcfc"></i><i style="left:696px;top:549px;width:8px;height:8px;background:#fcfcfc"></i><i style="left:602px;top:557px;width:6px;height:17px;background:#fcfcfc"></i><i style="left:602px;top:582px;width:200px;height:4px;background:#fbfbfb"></i></div></div><i style="left:78px;top:600px;width:8px;height:9px;background:#eaeaea"></i><i style="left:78px;top:609px;width:8px;height:8px;background:#f5f5f5"></i><i style="left:86px;top:600px;width:8px;height:9px;background:#dfdfdf"></i><i style="left:86px;top:609px;width:8px;height:8px;background:#f5f5f5"></i><i style="left:94px;top:600px;width:8px;height:9px;background:#eaeaea"></i><i style="left:94px;top:609px;width:8px;height:8px;background:#f5f5f5"></i><i style="left:102px;top:600px;width:8px;height:9px;background:#dedede"></i><i style="left:102px;top:609px;width:8px;height:8px;background:#f7f7f7"></i><i style="left:110px;top:600px;width:8px;height:9px;background:#ebebeb"></i><i style="left:110px;top:609px;width:8px;height:8px;background:#f0f0f0"></i><i style="left:118px;top:600px;width:8px;height:9px;background:#e3e3e3"></i><i style="left:118px;top:609px;width:8px;height:8px;background:#fafafa"></i><i style="left:126px;top:600px;width:8px;height:9px;background:#e6e6e6"></i><i style="left:126px;top:609px;width:8px;height:8px;background:#f8f8f8"></i><i style="left:134px;top:600px;width:8px;height:9px;background:#e4e4e4"></i><i style="left:134px;top:609px;width:8px;height:8px;background:#f8f8f8"></i><i style="left:142px;top:600px;width:8px;height:9px;background:#dcdcdc"></i><i style="left:142px;top:609px;width:8px;height:8px;background:#f5f5f5"></i><i style="left:150px;top:600px;width:8px;height:9px;background:#e2e2e2"></i><i style="left:150px;top:609px;width:8px;height:8px;background:#f5f5f5"></i><i style="left:158px;top:600px;width:8px;height:9px;background:#e8e8e8"></i><i style="left:158px;top:609px;width:8px;height:8px;background:#fbfbfb"></i><i style="left:166px;top:600px;width:8px;height:9px;background:#e4e4e4"></i><i style="left:166px;top:609px;width:8px;height:8px;background:#f6f6f6"></i><i style="left:174px;top:600px;width:8px;height:9px;background:#f0f0f0"></i><i style="left:174px;top:609px;width:8px;height:8px;background:#fbfbfb"></i><i style="left:182px;top:600px;width:8px;height:9px;background:#d5d5d5"></i><i style="left:182px;top:609px;width:8px;height:8px;background:#f7f7f7"></i><i style="left:190px;top:600px;width:8px;height:9px;background:#e5e5e5"></i><i style="left:190px;top:609px;width:8px;height:8px;background:#f7f7f7"></i><i style="left:198px;top:600px;width:8px;height:9px;background:#e5e5e5"></i><i style="left:198px;top:609px;width:8px;height:8px;background:#f7f7f7"></i><i style="left:206px;top:600px;width:8px;height:9px;background:#ebebeb"></i><i style="left:206px;top:609px;width:8px;height:8px;background:#f9f9f9"></i><i style="left:214px;top:600px;width:8px;height:9px;background:#dddddd"></i><i style="left:214px;top:609px;width:8px;height:8px;background:#f5f5f5"></i><i style="left:222px;top:600px;width:8px;height:9px;background:#e9e9e9"></i><i style="left:222px;top:609px;width:8px;height:8px;background:#f7f7f7"></i><i style="left:230px;top:600px;width:8px;height:9px;background:#e9e9e9"></i><i style="left:230px;top:609px;width:8px;height:8px;background:#f7f7f7"></i><i style="left:238px;top:600px;width:8px;height:9px;background:#e7e7e7"></i><i style="left:238px;top:609px;width:8px;height:8px;background:#f7f7f7"></i><i style="left:246px;top:600px;width:8px;height:9px;background:#e0e0e0"></i><i style="left:246px;top:609px;width:8px;height:8px;background:#f9f9f9"></i><i style="left:254px;top:600px;width:8px;height:9px;background:#ebebeb"></i><i style="left:254px;top:609px;width:8px;height:8px;background:#f9f9f9"></i><i style="left:102px;top:592px;width:8px;height:8px;background:#fcfcfc"></i><i style="left:134px;top:592px;width:8px;height:8px;background:#fcfcfc"></i><i style="left:142px;top:592px;width:8px;height:8px;background:#fcfcfc"></i><i style="left:158px;top:592px;width:8px;height:8px;background:#fcfcfc"></i><i style="left:166px;top:592px;width:8px;height:8px;background:#fcfcfc"></i><i style="left:72px;top:600px;width:6px;height:17px;background:#fcfcfc"></i><i style="left:72px;top:625px;width:203px;height:4px;background:#fbfbfb"></i><div style="position:absolute;left:351px;top:592px;width:127px;height:40px;overflow:hidden"><div style="position:absolute;left:-351px;top:-592px"><i style="left:359px;top:600px;width:8px;height:9px;background:#eaeaea"></i><i style="left:359px;top:609px;width:8px;height:8px;background:#f5f5f5"></i><i style="left:367px;top:600px;width:8px;height:9px;background:#dfdfdf"></i><i style="left:367px;top:609px;width:8px;height:8px;background:#f5f5f5"></i><i style="left:375px;top:600px;width:8px;height:9px;background:#eaeaea"></i><i style="left:375px;top:609px;width:8px;height:8px;background:#f5f5f5"></i><i style="left:383px;top:600px;width:8px;height:9px;background:#dedede"></i><i style="left:383px;top:609px;width:8px;height:8px;background:#f7f7f7"></i><i style="left:391px;top:600px;width:8px;height:9px;background:#ebebeb"></i><i style="left:391px;top:609px;width:8px;height:8px;background:#f0f0f0"></i><i style="left:399px;top:600px;width:8px;height:9px;background:#e3e3e3"></i><i style="left:399px;top:609px;width:8px;height:8px;background:#fafafa"></i><i style="left:407px;top:600px;width:8px;height:9px;background:#e6e6e6"></i><i style="left:407px;top:609px;width:8px;height:8px;background:#f8f8f8"></i><i style="left:415px;top:600px;width:8px;height:9px;background:#e4e4e4"></i><i style="left:415px;top:609px;width:8px;height:8px;background:#f8f8f8"></i><i style="left:423px;top:600px;width:8px;height:9px;background:#dcdcdc"></i><i style="left:423px;top:609px;width:8px;height:8px;background:#f5f5f5"></i><i style="left:431px;top:600px;width:8px;height:9px;background:#e2e2e2"></i><i style="left:431px;top:609px;width:8px;height:8px;background:#f5f5f5"></i><i style="left:439px;top:600px;width:8px;height:9px;background:#e8e8e8"></i><i style="left:439px;top:609px;width:8px;height:8px;background:#fbfbfb"></i><i style="left:447px;top:600px;width:8px;height:9px;background:#e4e4e4"></i><i style="left:447px;top:609px;width:8px;height:8px;background:#f6f6f6"></i><i style="left:455px;top:600px;width:8px;height:9px;background:#f0f0f0"></i><i style="left:455px;top:609px;width:8px;height:8px;background:#fbfbfb"></i><i style="left:463px;top:600px;width:8px;height:9px;background:#d5d5d5"></i><i style="left:463px;top:609px;width:8px;height:8px;background:#f7f7f7"></i><i style="left:471px;top:600px;width:8px;height:9px;background:#e5e5e5"></i><i style="left:471px;top:609px;width:8px;height:8px;background:#f7f7f7"></i><i style="left:479px;top:600px;width:8px;height:9px;background:#e5e5e5"></i><i style="left:479px;top:609px;width:8px;height:8px;background:#f7f7f7"></i><i style="left:383px;top:592px;width:8px;height:8px;background:#fcfcfc"></i><i style="left:415px;top:592px;width:8px;height:8px;background:#fcfcfc"></i><i style="left:423px;top:592px;width:8px;height:8px;background:#fcfcfc"></i><i style="left:439px;top:592px;width:8px;height:8px;background:#fcfcfc"></i><i style="left:447px;top:592px;width:8px;height:8px;background:#fcfcfc"></i><i style="left:353px;top:600px;width:6px;height:17px;background:#fcfcfc"></i><i style="left:353px;top:625px;width:200px;height:4px;background:#fbfbfb"></i></div></div><div style="position:absolute;left:608px;top:592px;width:118px;height:40px;overflow:hidden"><div style="position:absolute;left:-608px;top:-592px"><i style="left:607px;top:600px;width:8px;height:9px;background:#eaeaea"></i><i style="left:607px;top:609px;width:8px;height:8px;background:#f5f5f5"></i><i style="left:615px;top:600px;width:8px;height:9px;background:#dfdfdf"></i><i style="left:615px;top:609px;width:8px;height:8px;background:#f5f5f5"></i><i style="left:623px;top:600px;width:8px;height:9px;background:#eaeaea"></i><i style="left:623px;top:609px;width:8px;height:8px;background:#f5f5f5"></i><i style="left:631px;top:600px;width:8px;height:9px;background:#dedede"></i><i style="left:631px;top:609px;width:8px;height:8px;background:#f7f7f7"></i><i style="left:639px;top:600px;width:8px;height:9px;background:#ebebeb"></i><i style="left:639px;top:609px;width:8px;height:8px;background:#f0f0f0"></i><i style="left:647px;top:600px;width:8px;height:9px;background:#e3e3e3"></i><i style="left:647px;top:609px;width:8px;height:8px;background:#fafafa"></i><i style="left:655px;top:600px;width:8px;height:9px;background:#e6e6e6"></i><i style="left:655px;top:609px;width:8px;height:8px;background:#f8f8f8"></i><i style="left:663px;top:600px;width:8px;height:9px;background:#e4e4e4"></i><i style="left:663px;top:609px;width:8px;height:8px;background:#f8f8f8"></i><i style="left:671px;top:600px;width:8px;height:9px;background:#dcdcdc"></i><i style="left:671px;top:609px;width:8px;height:8px;background:#f5f5f5"></i><i style="left:679px;top:600px;width:8px;height:9px;background:#e2e2e2"></i><i style="left:679px;top:609px;width:8px;height:8px;background:#f5f5f5"></i><i style="left:687px;top:600px;width:8px;height:9px;background:#e8e8e8"></i><i style="left:687px;top:609px;width:8px;height:8px;background:#fbfbfb"></i><i style="left:695px;top:600px;width:8px;height:9px;background:#e4e4e4"></i><i style="left:695px;top:609px;width:8px;height:8px;background:#f6f6f6"></i><i style="left:703px;top:600px;width:8px;height:9px;background:#f0f0f0"></i><i style="left:703px;top:609px;width:8px;height:8px;background:#fbfbfb"></i><i style="left:711px;top:600px;width:8px;height:9px;background:#d5d5d5"></i><i style="left:711px;top:609px;width:8px;height:8px;background:#f7f7f7"></i><i style="left:719px;top:600px;width:8px;height:9px;background:#e5e5e5"></i><i style="left:719px;top:609px;width:8px;height:8px;background:#f7f7f7"></i><i style="left:727px;top:600px;width:8px;height:9px;background:#e5e5e5"></i><i style="left:727px;top:609px;width:8px;height:8px;background:#f7f7f7"></i><i style="left:631px;top:592px;width:8px;height:8px;background:#fcfcfc"></i><i style="left:663px;top:592px;width:8px;height:8px;background:#fcfcfc"></i><i style="left:671px;top:592px;width:8px;height:8px;background:#fcfcfc"></i><i style="left:687px;top:592px;width:8px;height:8px;background:#fcfcfc"></i><i style="left:695px;top:592px;width:8px;height:8px;background:#fcfcfc"></i><i style="left:601px;top:600px;width:6px;height:17px;background:#fcfcfc"></i><i style="left:601px;top:625px;width:200px;height:4px;background:#fbfbfb"></i></div></div><i style="left:79px;top:649px;width:8px;height:9px;background:#eaeaea"></i><i style="left:79px;top:658px;width:8px;height:8px;background:#f5f5f5"></i><i style="left:87px;top:649px;width:8px;height:9px;background:#dfdfdf"></i><i style="left:87px;top:658px;width:8px;height:8px;background:#f5f5f5"></i><i style="left:95px;top:649px;width:8px;height:9px;background:#eaeaea"></i><i style="left:95px;top:658px;width:8px;height:8px;background:#f5f5f5"></i><i style="left:103px;top:649px;width:8px;height:9px;background:#dedede"></i><i style="left:103px;top:658px;width:8px;height:8px;background:#f7f7f7"></i><i style="left:111px;top:649px;width:8px;height:9px;background:#ebebeb"></i><i style="left:111px;top:658px;width:8px;height:8px;background:#f0f0f0"></i><i style="left:119px;top:649px;width:8px;height:9px;background:#e3e3e3"></i><i style="left:119px;top:658px;width:8px;height:8px;background:#fafafa"></i><i style="left:127px;top:649px;width:8px;height:9px;background:#e6e6e6"></i><i style="left:127px;top:658px;width:8px;height:8px;background:#f8f8f8"></i><i style="left:135px;top:649px;width:8px;height:9px;background:#e4e4e4"></i><i style="left:135px;top:658px;width:8px;height:8px;background:#f8f8f8"></i><i style="left:143px;top:649px;width:8px;height:9px;background:#dcdcdc"></i><i style="left:143px;top:658px;width:8px;height:8px;background:#f5f5f5"></i><i style="left:151px;top:649px;width:8px;height:9px;background:#e2e2e2"></i><i style="left:151px;top:658px;width:8px;height:8px;background:#f5f5f5"></i><i style="left:159px;top:649px;width:8px;height:9px;background:#e8e8e8"></i><i style="left:159px;top:658px;width:8px;height:8px;background:#fbfbfb"></i><i style="left:167px;top:649px;width:8px;height:9px;background:#e4e4e4"></i><i style="left:167px;top:658px;width:8px;height:8px;background:#f6f6f6"></i><i style="left:175px;top:649px;width:8px;height:9px;background:#f0f0f0"></i><i style="left:175px;top:658px;width:8px;height:8px;background:#fbfbfb"></i><i style="left:183px;top:649px;width:8px;height:9px;background:#d5d5d5"></i><i style="left:183px;top:658px;width:8px;height:8px;background:#f7f7f7"></i><i style="left:191px;top:649px;width:8px;height:9px;background:#e5e5e5"></i><i style="left:191px;top:658px;width:8px;height:8px;background:#f7f7f7"></i><i style="left:199px;top:649px;width:8px;height:9px;background:#e5e5e5"></i><i style="left:199px;top:658px;width:8px;height:8px;background:#f7f7f7"></i><i style="left:207px;top:649px;width:8px;height:9px;background:#ebebeb"></i><i style="left:207px;top:658px;width:8px;height:8px;background:#f9f9f9"></i><i style="left:215px;top:649px;width:8px;height:9px;background:#dddddd"></i><i style="left:215px;top:658px;width:8px;height:8px;background:#f5f5f5"></i><i style="left:223px;top:649px;width:8px;height:9px;background:#e9e9e9"></i><i style="left:223px;top:658px;width:8px;height:8px;background:#f7f7f7"></i><i style="left:231px;top:649px;width:8px;height:9px;background:#e9e9e9"></i><i style="left:231px;top:658px;width:8px;height:8px;background:#f7f7f7"></i><i style="left:239px;top:649px;width:8px;height:9px;background:#e7e7e7"></i><i style="left:239px;top:658px;width:8px;height:8px;background:#f7f7f7"></i><i style="left:247px;top:649px;width:8px;height:9px;background:#e0e0e0"></i><i style="left:247px;top:658px;width:8px;height:8px;background:#f9f9f9"></i><i style="left:255px;top:649px;width:8px;height:9px;background:#ebebeb"></i><i style="left:255px;top:658px;width:8px;height:8px;background:#f9f9f9"></i><i style="left:103px;top:641px;width:8px;height:8px;background:#fcfcfc"></i><i style="left:135px;top:641px;width:8px;height:8px;background:#fcfcfc"></i><i style="left:143px;top:641px;width:8px;height:8px;background:#fcfcfc"></i><i style="left:159px;top:641px;width:8px;height:8px;background:#fcfcfc"></i><i style="left:167px;top:641px;width:8px;height:8px;background:#fcfcfc"></i><i style="left:73px;top:649px;width:6px;height:17px;background:#fcfcfc"></i><i style="left:73px;top:674px;width:203px;height:4px;background:#fbfbfb"></i><div style="position:absolute;left:352px;top:641px;width:126px;height:40px;overflow:hidden"><div style="position:absolute;left:-352px;top:-641px"><i style="left:360px;top:649px;width:8px;height:9px;background:#eaeaea"></i><i style="left:360px;top:658px;width:8px;height:8px;background:#f5f5f5"></i><i style="left:368px;top:649px;width:8px;height:9px;background:#dfdfdf"></i><i style="left:368px;top:658px;width:8px;height:8px;background:#f5f5f5"></i><i style="left:376px;top:649px;width:8px;height:9px;background:#eaeaea"></i><i style="left:376px;top:658px;width:8px;height:8px;background:#f5f5f5"></i><i style="left:384px;top:649px;width:8px;height:9px;background:#dedede"></i><i style="left:384px;top:658px;width:8px;height:8px;background:#f7f7f7"></i><i style="left:392px;top:649px;width:8px;height:9px;background:#ebebeb"></i><i style="left:392px;top:658px;width:8px;height:8px;background:#f0f0f0"></i><i style="left:400px;top:649px;width:8px;height:9px;background:#e3e3e3"></i><i style="left:400px;top:658px;width:8px;height:8px;background:#fafafa"></i><i style="left:408px;top:649px;width:8px;height:9px;background:#e6e6e6"></i><i style="left:408px;top:658px;width:8px;height:8px;background:#f8f8f8"></i><i style="left:416px;top:649px;width:8px;height:9px;background:#e4e4e4"></i><i style="left:416px;top:658px;width:8px;height:8px;background:#f8f8f8"></i><i style="left:424px;top:649px;width:8px;height:9px;background:#dcdcdc"></i><i style="left:424px;top:658px;width:8px;height:8px;background:#f5f5f5"></i><i style="left:432px;top:649px;width:8px;height:9px;background:#e2e2e2"></i><i style="left:432px;top:658px;width:8px;height:8px;background:#f5f5f5"></i><i style="left:440px;top:649px;width:8px;height:9px;background:#e8e8e8"></i><i style="left:440px;top:658px;width:8px;height:8px;background:#fbfbfb"></i><i style="left:448px;top:649px;width:8px;height:9px;background:#e4e4e4"></i><i style="left:448px;top:658px;width:8px;height:8px;background:#f6f6f6"></i><i style="left:456px;top:649px;width:8px;height:9px;background:#f0f0f0"></i><i style="left:456px;top:658px;width:8px;height:8px;background:#fbfbfb"></i><i style="left:464px;top:649px;width:8px;height:9px;background:#d5d5d5"></i><i style="left:464px;top:658px;width:8px;height:8px;background:#f7f7f7"></i><i style="left:472px;top:649px;width:8px;height:9px;background:#e5e5e5"></i><i style="left:472px;top:658px;width:8px;height:8px;background:#f7f7f7"></i><i style="left:480px;top:649px;width:8px;height:9px;background:#e5e5e5"></i><i style="left:480px;top:658px;width:8px;height:8px;background:#f7f7f7"></i><i style="left:384px;top:641px;width:8px;height:8px;background:#fcfcfc"></i><i style="left:416px;top:641px;width:8px;height:8px;background:#fcfcfc"></i><i style="left:424px;top:641px;width:8px;height:8px;background:#fcfcfc"></i><i style="left:440px;top:641px;width:8px;height:8px;background:#fcfcfc"></i><i style="left:448px;top:641px;width:8px;height:8px;background:#fcfcfc"></i><i style="left:354px;top:649px;width:6px;height:17px;background:#fcfcfc"></i><i style="left:354px;top:674px;width:200px;height:4px;background:#fbfbfb"></i></div></div><div style="position:absolute;left:608px;top:641px;width:118px;height:40px;overflow:hidden"><div style="position:absolute;left:-608px;top:-641px"><i style="left:608px;top:649px;width:8px;height:9px;background:#eaeaea"></i><i style="left:608px;top:658px;width:8px;height:8px;background:#f5f5f5"></i><i style="left:616px;top:649px;width:8px;height:9px;background:#dfdfdf"></i><i style="left:616px;top:658px;width:8px;height:8px;background:#f5f5f5"></i><i style="left:624px;top:649px;width:8px;height:9px;background:#eaeaea"></i><i style="left:624px;top:658px;width:8px;height:8px;background:#f5f5f5"></i><i style="left:632px;top:649px;width:8px;height:9px;background:#dedede"></i><i style="left:632px;top:658px;width:8px;height:8px;background:#f7f7f7"></i><i style="left:640px;top:649px;width:8px;height:9px;background:#ebebeb"></i><i style="left:640px;top:658px;width:8px;height:8px;background:#f0f0f0"></i><i style="left:648px;top:649px;width:8px;height:9px;background:#e3e3e3"></i><i style="left:648px;top:658px;width:8px;height:8px;background:#fafafa"></i><i style="left:656px;top:649px;width:8px;height:9px;background:#e6e6e6"></i><i style="left:656px;top:658px;width:8px;height:8px;background:#f8f8f8"></i><i style="left:664px;top:649px;width:8px;height:9px;background:#e4e4e4"></i><i style="left:664px;top:658px;width:8px;height:8px;background:#f8f8f8"></i><i style="left:672px;top:649px;width:8px;height:9px;background:#dcdcdc"></i><i style="left:672px;top:658px;width:8px;height:8px;background:#f5f5f5"></i><i style="left:680px;top:649px;width:8px;height:9px;background:#e2e2e2"></i><i style="left:680px;top:658px;width:8px;height:8px;background:#f5f5f5"></i><i style="left:688px;top:649px;width:8px;height:9px;background:#e8e8e8"></i><i style="left:688px;top:658px;width:8px;height:8px;background:#fbfbfb"></i><i style="left:696px;top:649px;width:8px;height:9px;background:#e4e4e4"></i><i style="left:696px;top:658px;width:8px;height:8px;background:#f6f6f6"></i><i style="left:704px;top:649px;width:8px;height:9px;background:#f0f0f0"></i><i style="left:704px;top:658px;width:8px;height:8px;background:#fbfbfb"></i><i style="left:712px;top:649px;width:8px;height:9px;background:#d5d5d5"></i><i style="left:712px;top:658px;width:8px;height:8px;background:#f7f7f7"></i><i style="left:720px;top:649px;width:8px;height:9px;background:#e5e5e5"></i><i style="left:720px;top:658px;width:8px;height:8px;background:#f7f7f7"></i><i style="left:728px;top:649px;width:8px;height:9px;background:#e5e5e5"></i><i style="left:728px;top:658px;width:8px;height:8px;background:#f7f7f7"></i><i style="left:632px;top:641px;width:8px;height:8px;background:#fcfcfc"></i><i style="left:664px;top:641px;width:8px;height:8px;background:#fcfcfc"></i><i style="left:672px;top:641px;width:8px;height:8px;background:#fcfcfc"></i><i style="left:688px;top:641px;width:8px;height:8px;background:#fcfcfc"></i><i style="left:696px;top:641px;width:8px;height:8px;background:#fcfcfc"></i><i style="left:602px;top:649px;width:6px;height:17px;background:#fcfcfc"></i><i style="left:602px;top:674px;width:200px;height:4px;background:#fbfbfb"></i></div></div><i style="left:81px;top:692px;width:8px;height:9px;background:#eaeaea"></i><i style="left:81px;top:701px;width:8px;height:8px;background:#f5f5f5"></i><i style="left:89px;top:692px;width:8px;height:9px;background:#dfdfdf"></i><i style="left:89px;top:701px;width:8px;height:8px;background:#f5f5f5"></i><i style="left:97px;top:692px;width:8px;height:9px;background:#eaeaea"></i><i style="left:97px;top:701px;width:8px;height:8px;background:#f5f5f5"></i><i style="left:105px;top:692px;width:8px;height:9px;background:#dedede"></i><i style="left:105px;top:701px;width:8px;height:8px;background:#f7f7f7"></i><i style="left:113px;top:692px;width:8px;height:9px;background:#ebebeb"></i><i style="left:113px;top:701px;width:8px;height:8px;background:#f0f0f0"></i><i style="left:121px;top:692px;width:8px;height:9px;background:#e3e3e3"></i><i style="left:121px;top:701px;width:8px;height:8px;background:#fafafa"></i><i style="left:129px;top:692px;width:8px;height:9px;background:#e6e6e6"></i><i style="left:129px;top:701px;width:8px;height:8px;background:#f8f8f8"></i><i style="left:137px;top:692px;width:8px;height:9px;background:#e4e4e4"></i><i style="left:137px;top:701px;width:8px;height:8px;background:#f8f8f8"></i><i style="left:145px;top:692px;width:8px;height:9px;background:#dcdcdc"></i><i style="left:145px;top:701px;width:8px;height:8px;background:#f5f5f5"></i><i style="left:153px;top:692px;width:8px;height:9px;background:#e2e2e2"></i><i style="left:153px;top:701px;width:8px;height:8px;background:#f5f5f5"></i><i style="left:161px;top:692px;width:8px;height:9px;background:#e8e8e8"></i><i style="left:161px;top:701px;width:8px;height:8px;background:#fbfbfb"></i><i style="left:169px;top:692px;width:8px;height:9px;background:#e4e4e4"></i><i style="left:169px;top:701px;width:8px;height:8px;background:#f6f6f6"></i><i style="left:177px;top:692px;width:8px;height:9px;background:#f0f0f0"></i><i style="left:177px;top:701px;width:8px;height:8px;background:#fbfbfb"></i><i style="left:185px;top:692px;width:8px;height:9px;background:#d5d5d5"></i><i style="left:185px;top:701px;width:8px;height:8px;background:#f7f7f7"></i><i style="left:193px;top:692px;width:8px;height:9px;background:#e5e5e5"></i><i style="left:193px;top:701px;width:8px;height:8px;background:#f7f7f7"></i><i style="left:201px;top:692px;width:8px;height:9px;background:#e5e5e5"></i><i style="left:201px;top:701px;width:8px;height:8px;background:#f7f7f7"></i><i style="left:209px;top:692px;width:8px;height:9px;background:#ebebeb"></i><i style="left:209px;top:701px;width:8px;height:8px;background:#f9f9f9"></i><i style="left:217px;top:692px;width:8px;height:9px;background:#dddddd"></i><i style="left:217px;top:701px;width:8px;height:8px;background:#f5f5f5"></i><i style="left:225px;top:692px;width:8px;height:9px;background:#e9e9e9"></i><i style="left:225px;top:701px;width:8px;height:8px;background:#f7f7f7"></i><i style="left:233px;top:692px;width:8px;height:9px;background:#e9e9e9"></i><i style="left:233px;top:701px;width:8px;height:8px;background:#f7f7f7"></i><i style="left:241px;top:692px;width:8px;height:9px;background:#e7e7e7"></i><i style="left:241px;top:701px;width:8px;height:8px;background:#f7f7f7"></i><i style="left:249px;top:692px;width:8px;height:9px;background:#e0e0e0"></i><i style="left:249px;top:701px;width:8px;height:8px;background:#f9f9f9"></i><i style="left:257px;top:692px;width:8px;height:9px;background:#ebebeb"></i><i style="left:257px;top:701px;width:8px;height:8px;background:#f9f9f9"></i><i style="left:105px;top:684px;width:8px;height:8px;background:#fcfcfc"></i><i style="left:137px;top:684px;width:8px;height:8px;background:#fcfcfc"></i><i style="left:145px;top:684px;width:8px;height:8px;background:#fcfcfc"></i><i style="left:161px;top:684px;width:8px;height:8px;background:#fcfcfc"></i><i style="left:169px;top:684px;width:8px;height:8px;background:#fcfcfc"></i><i style="left:75px;top:692px;width:6px;height:17px;background:#fcfcfc"></i><i style="left:75px;top:717px;width:203px;height:4px;background:#fbfbfb"></i><div style="position:absolute;left:354px;top:684px;width:124px;height:40px;overflow:hidden"><div style="position:absolute;left:-354px;top:-684px"><i style="left:362px;top:692px;width:8px;height:9px;background:#eaeaea"></i><i style="left:362px;top:701px;width:8px;height:8px;background:#f5f5f5"></i><i style="left:370px;top:692px;width:8px;height:9px;background:#dfdfdf"></i><i style="left:370px;top:701px;width:8px;height:8px;background:#f5f5f5"></i><i style="left:378px;top:692px;width:8px;height:9px;background:#eaeaea"></i><i style="left:378px;top:701px;width:8px;height:8px;background:#f5f5f5"></i><i style="left:386px;top:692px;width:8px;height:9px;background:#dedede"></i><i style="left:386px;top:701px;width:8px;height:8px;background:#f7f7f7"></i><i style="left:394px;top:692px;width:8px;height:9px;background:#ebebeb"></i><i style="left:394px;top:701px;width:8px;height:8px;background:#f0f0f0"></i><i style="left:402px;top:692px;width:8px;height:9px;background:#e3e3e3"></i><i style="left:402px;top:701px;width:8px;height:8px;background:#fafafa"></i><i style="left:410px;top:692px;width:8px;height:9px;background:#e6e6e6"></i><i style="left:410px;top:701px;width:8px;height:8px;background:#f8f8f8"></i><i style="left:418px;top:692px;width:8px;height:9px;background:#e4e4e4"></i><i style="left:418px;top:701px;width:8px;height:8px;background:#f8f8f8"></i><i style="left:426px;top:692px;width:8px;height:9px;background:#dcdcdc"></i><i style="left:426px;top:701px;width:8px;height:8px;background:#f5f5f5"></i><i style="left:434px;top:692px;width:8px;height:9px;background:#e2e2e2"></i><i style="left:434px;top:701px;width:8px;height:8px;background:#f5f5f5"></i><i style="left:442px;top:692px;width:8px;height:9px;background:#e8e8e8"></i><i style="left:442px;top:701px;width:8px;height:8px;background:#fbfbfb"></i><i style="left:450px;top:692px;width:8px;height:9px;background:#e4e4e4"></i><i style="left:450px;top:701px;width:8px;height:8px;background:#f6f6f6"></i><i style="left:458px;top:692px;width:8px;height:9px;background:#f0f0f0"></i><i style="left:458px;top:701px;width:8px;height:8px;background:#fbfbfb"></i><i style="left:466px;top:692px;width:8px;height:9px;background:#d5d5d5"></i><i style="left:466px;top:701px;width:8px;height:8px;background:#f7f7f7"></i><i style="left:474px;top:692px;width:8px;height:9px;background:#e5e5e5"></i><i style="left:474px;top:701px;width:8px;height:8px;background:#f7f7f7"></i><i style="left:482px;top:692px;width:8px;height:9px;background:#e5e5e5"></i><i style="left:482px;top:701px;width:8px;height:8px;background:#f7f7f7"></i><i style="left:386px;top:684px;width:8px;height:8px;background:#fcfcfc"></i><i style="left:418px;top:684px;width:8px;height:8px;background:#fcfcfc"></i><i style="left:426px;top:684px;width:8px;height:8px;background:#fcfcfc"></i><i style="left:442px;top:684px;width:8px;height:8px;background:#fcfcfc"></i><i style="left:450px;top:684px;width:8px;height:8px;background:#fcfcfc"></i><i style="left:356px;top:692px;width:6px;height:17px;background:#fcfcfc"></i><i style="left:356px;top:717px;width:200px;height:4px;background:#fbfbfb"></i></div></div><div style="position:absolute;left:608px;top:684px;width:118px;height:40px;overflow:hidden"><div style="position:absolute;left:-608px;top:-684px"><i style="left:610px;top:692px;width:8px;height:9px;background:#eaeaea"></i><i style="left:610px;top:701px;width:8px;height:8px;background:#f5f5f5"></i><i style="left:618px;top:692px;width:8px;height:9px;background:#dfdfdf"></i><i style="left:618px;top:701px;width:8px;height:8px;background:#f5f5f5"></i><i style="left:626px;top:692px;width:8px;height:9px;background:#eaeaea"></i><i style="left:626px;top:701px;width:8px;height:8px;background:#f5f5f5"></i><i style="left:634px;top:692px;width:8px;height:9px;background:#dedede"></i><i style="left:634px;top:701px;width:8px;height:8px;background:#f7f7f7"></i><i style="left:642px;top:692px;width:8px;height:9px;background:#ebebeb"></i><i style="left:642px;top:701px;width:8px;height:8px;background:#f0f0f0"></i><i style="left:650px;top:692px;width:8px;height:9px;background:#e3e3e3"></i><i style="left:650px;top:701px;width:8px;height:8px;background:#fafafa"></i><i style="left:658px;top:692px;width:8px;height:9px;background:#e6e6e6"></i><i style="left:658px;top:701px;width:8px;height:8px;background:#f8f8f8"></i><i style="left:666px;top:692px;width:8px;height:9px;background:#e4e4e4"></i><i style="left:666px;top:701px;width:8px;height:8px;background:#f8f8f8"></i><i style="left:674px;top:692px;width:8px;height:9px;background:#dcdcdc"></i><i style="left:674px;top:701px;width:8px;height:8px;background:#f5f5f5"></i><i style="left:682px;top:692px;width:8px;height:9px;background:#e2e2e2"></i><i style="left:682px;top:701px;width:8px;height:8px;background:#f5f5f5"></i><i style="left:690px;top:692px;width:8px;height:9px;background:#e8e8e8"></i><i style="left:690px;top:701px;width:8px;height:8px;background:#fbfbfb"></i><i style="left:698px;top:692px;width:8px;height:9px;background:#e4e4e4"></i><i style="left:698px;top:701px;width:8px;height:8px;background:#f6f6f6"></i><i style="left:706px;top:692px;width:8px;height:9px;background:#f0f0f0"></i><i style="left:706px;top:701px;width:8px;height:8px;background:#fbfbfb"></i><i style="left:714px;top:692px;width:8px;height:9px;background:#d5d5d5"></i><i style="left:714px;top:701px;width:8px;height:8px;background:#f7f7f7"></i><i style="left:722px;top:692px;width:8px;height:9px;background:#e5e5e5"></i><i style="left:722px;top:701px;width:8px;height:8px;background:#f7f7f7"></i><i style="left:730px;top:692px;width:8px;height:9px;background:#e5e5e5"></i><i style="left:730px;top:701px;width:8px;height:8px;background:#f7f7f7"></i><i style="left:634px;top:684px;width:8px;height:8px;background:#fcfcfc"></i><i style="left:666px;top:684px;width:8px;height:8px;background:#fcfcfc"></i><i style="left:674px;top:684px;width:8px;height:8px;background:#fcfcfc"></i><i style="left:690px;top:684px;width:8px;height:8px;background:#fcfcfc"></i><i style="left:698px;top:684px;width:8px;height:8px;background:#fcfcfc"></i><i style="left:604px;top:692px;width:6px;height:17px;background:#fcfcfc"></i><i style="left:604px;top:717px;width:200px;height:4px;background:#fbfbfb"></i></div></div><i style="left:82px;top:741px;width:8px;height:9px;background:#eaeaea"></i><i style="left:82px;top:750px;width:8px;height:8px;background:#f5f5f5"></i><i style="left:90px;top:741px;width:8px;height:9px;background:#dfdfdf"></i><i style="left:90px;top:750px;width:8px;height:8px;background:#f5f5f5"></i><i style="left:98px;top:741px;width:8px;height:9px;background:#eaeaea"></i><i style="left:98px;top:750px;width:8px;height:8px;background:#f5f5f5"></i><i style="left:106px;top:741px;width:8px;height:9px;background:#dedede"></i><i style="left:106px;top:750px;width:8px;height:8px;background:#f7f7f7"></i><i style="left:114px;top:741px;width:8px;height:9px;background:#ebebeb"></i><i style="left:114px;top:750px;width:8px;height:8px;background:#f0f0f0"></i><i style="left:122px;top:741px;width:8px;height:9px;background:#e3e3e3"></i><i style="left:122px;top:750px;width:8px;height:8px;background:#fafafa"></i><i style="left:130px;top:741px;width:8px;height:9px;background:#e6e6e6"></i><i style="left:130px;top:750px;width:8px;height:8px;background:#f8f8f8"></i><i style="left:138px;top:741px;width:8px;height:9px;background:#e4e4e4"></i><i style="left:138px;top:750px;width:8px;height:8px;background:#f8f8f8"></i><i style="left:146px;top:741px;width:8px;height:9px;background:#dcdcdc"></i><i style="left:146px;top:750px;width:8px;height:8px;background:#f5f5f5"></i><i style="left:154px;top:741px;width:8px;height:9px;background:#e2e2e2"></i><i style="left:154px;top:750px;width:8px;height:8px;background:#f5f5f5"></i><i style="left:162px;top:741px;width:8px;height:9px;background:#e8e8e8"></i><i style="left:162px;top:750px;width:8px;height:8px;background:#fbfbfb"></i><i style="left:170px;top:741px;width:8px;height:9px;background:#e4e4e4"></i><i style="left:170px;top:750px;width:8px;height:8px;background:#f6f6f6"></i><i style="left:178px;top:741px;width:8px;height:9px;background:#f0f0f0"></i><i style="left:178px;top:750px;width:8px;height:8px;background:#fbfbfb"></i><i style="left:186px;top:741px;width:8px;height:9px;background:#d5d5d5"></i><i style="left:186px;top:750px;width:8px;height:8px;background:#f7f7f7"></i><i style="left:194px;top:741px;width:8px;height:9px;background:#e5e5e5"></i><i style="left:194px;top:750px;width:8px;height:8px;background:#f7f7f7"></i><i style="left:202px;top:741px;width:8px;height:9px;background:#e5e5e5"></i><i style="left:202px;top:750px;width:8px;height:8px;background:#f7f7f7"></i><i style="left:210px;top:741px;width:8px;height:9px;background:#ebebeb"></i><i style="left:210px;top:750px;width:8px;height:8px;background:#f9f9f9"></i><i style="left:218px;top:741px;width:8px;height:9px;background:#dddddd"></i><i style="left:218px;top:750px;width:8px;height:8px;background:#f5f5f5"></i><i style="left:226px;top:741px;width:8px;height:9px;background:#e9e9e9"></i><i style="left:226px;top:750px;width:8px;height:8px;background:#f7f7f7"></i><i style="left:234px;top:741px;width:8px;height:9px;background:#e9e9e9"></i><i style="left:234px;top:750px;width:8px;height:8px;background:#f7f7f7"></i><i style="left:242px;top:741px;width:8px;height:9px;background:#e7e7e7"></i><i style="left:242px;top:750px;width:8px;height:8px;background:#f7f7f7"></i><i style="left:250px;top:741px;width:8px;height:9px;background:#e0e0e0"></i><i style="left:250px;top:750px;width:8px;height:8px;background:#f9f9f9"></i><i style="left:258px;top:741px;width:8px;height:9px;background:#ebebeb"></i><i style="left:258px;top:750px;width:8px;height:8px;background:#f9f9f9"></i><i style="left:106px;top:733px;width:8px;height:8px;background:#fcfcfc"></i><i style="left:138px;top:733px;width:8px;height:8px;background:#fcfcfc"></i><i style="left:146px;top:733px;width:8px;height:8px;background:#fcfcfc"></i><i style="left:162px;top:733px;width:8px;height:8px;background:#fcfcfc"></i><i style="left:170px;top:733px;width:8px;height:8px;background:#fcfcfc"></i><i style="left:76px;top:741px;width:6px;height:17px;background:#fcfcfc"></i><i style="left:76px;top:766px;width:203px;height:4px;background:#fbfbfb"></i><div style="position:absolute;left:355px;top:733px;width:123px;height:40px;overflow:hidden"><div style="position:absolute;left:-355px;top:-733px"><i style="left:363px;top:741px;width:8px;height:9px;background:#eaeaea"></i><i style="left:363px;top:750px;width:8px;height:8px;background:#f5f5f5"></i><i style="left:371px;top:741px;width:8px;height:9px;background:#dfdfdf"></i><i style="left:371px;top:750px;width:8px;height:8px;background:#f5f5f5"></i><i style="left:379px;top:741px;width:8px;height:9px;background:#eaeaea"></i><i style="left:379px;top:750px;width:8px;height:8px;background:#f5f5f5"></i><i style="left:387px;top:741px;width:8px;height:9px;background:#dedede"></i><i style="left:387px;top:750px;width:8px;height:8px;background:#f7f7f7"></i><i style="left:395px;top:741px;width:8px;height:9px;background:#ebebeb"></i><i style="left:395px;top:750px;width:8px;height:8px;background:#f0f0f0"></i><i style="left:403px;top:741px;width:8px;height:9px;background:#e3e3e3"></i><i style="left:403px;top:750px;width:8px;height:8px;background:#fafafa"></i><i style="left:411px;top:741px;width:8px;height:9px;background:#e6e6e6"></i><i style="left:411px;top:750px;width:8px;height:8px;background:#f8f8f8"></i><i style="left:419px;top:741px;width:8px;height:9px;background:#e4e4e4"></i><i style="left:419px;top:750px;width:8px;height:8px;background:#f8f8f8"></i><i style="left:427px;top:741px;width:8px;height:9px;background:#dcdcdc"></i><i style="left:427px;top:750px;width:8px;height:8px;background:#f5f5f5"></i><i style="left:435px;top:741px;width:8px;height:9px;background:#e2e2e2"></i><i style="left:435px;top:750px;width:8px;height:8px;background:#f5f5f5"></i><i style="left:443px;top:741px;width:8px;height:9px;background:#e8e8e8"></i><i style="left:443px;top:750px;width:8px;height:8px;background:#fbfbfb"></i><i style="left:451px;top:741px;width:8px;height:9px;background:#e4e4e4"></i><i style="left:451px;top:750px;width:8px;height:8px;background:#f6f6f6"></i><i style="left:459px;top:741px;width:8px;height:9px;background:#f0f0f0"></i><i style="left:459px;top:750px;width:8px;height:8px;background:#fbfbfb"></i><i style="left:467px;top:741px;width:8px;height:9px;background:#d5d5d5"></i><i style="left:467px;top:750px;width:8px;height:8px;background:#f7f7f7"></i><i style="left:475px;top:741px;width:8px;height:9px;background:#e5e5e5"></i><i style="left:475px;top:750px;width:8px;height:8px;background:#f7f7f7"></i><i style="left:483px;top:741px;width:8px;height:9px;background:#e5e5e5"></i><i style="left:483px;top:750px;width:8px;height:8px;background:#f7f7f7"></i><i style="left:387px;top:733px;width:8px;height:8px;background:#fcfcfc"></i><i style="left:419px;top:733px;width:8px;height:8px;background:#fcfcfc"></i><i style="left:427px;top:733px;width:8px;height:8px;background:#fcfcfc"></i><i style="left:443px;top:733px;width:8px;height:8px;background:#fcfcfc"></i><i style="left:451px;top:733px;width:8px;height:8px;background:#fcfcfc"></i><i style="left:357px;top:741px;width:6px;height:17px;background:#fcfcfc"></i><i style="left:357px;top:766px;width:200px;height:4px;background:#fbfbfb"></i></div></div><div style="position:absolute;left:608px;top:733px;width:118px;height:40px;overflow:hidden"><div style="position:absolute;left:-608px;top:-733px"><i style="left:611px;top:741px;width:8px;height:9px;background:#eaeaea"></i><i style="left:611px;top:750px;width:8px;height:8px;background:#f5f5f5"></i><i style="left:619px;top:741px;width:8px;height:9px;background:#dfdfdf"></i><i style="left:619px;top:750px;width:8px;height:8px;background:#f5f5f5"></i><i style="left:627px;top:741px;width:8px;height:9px;background:#eaeaea"></i><i style="left:627px;top:750px;width:8px;height:8px;background:#f5f5f5"></i><i style="left:635px;top:741px;width:8px;height:9px;background:#dedede"></i><i style="left:635px;top:750px;width:8px;height:8px;background:#f7f7f7"></i><i style="left:643px;top:741px;width:8px;height:9px;background:#ebebeb"></i><i style="left:643px;top:750px;width:8px;height:8px;background:#f0f0f0"></i><i style="left:651px;top:741px;width:8px;height:9px;background:#e3e3e3"></i><i style="left:651px;top:750px;width:8px;height:8px;background:#fafafa"></i><i style="left:659px;top:741px;width:8px;height:9px;background:#e6e6e6"></i><i style="left:659px;top:750px;width:8px;height:8px;background:#f8f8f8"></i><i style="left:667px;top:741px;width:8px;height:9px;background:#e4e4e4"></i><i style="left:667px;top:750px;width:8px;height:8px;background:#f8f8f8"></i><i style="left:675px;top:741px;width:8px;height:9px;background:#dcdcdc"></i><i style="left:675px;top:750px;width:8px;height:8px;background:#f5f5f5"></i><i style="left:683px;top:741px;width:8px;height:9px;background:#e2e2e2"></i><i style="left:683px;top:750px;width:8px;height:8px;background:#f5f5f5"></i><i style="left:691px;top:741px;width:8px;height:9px;background:#e8e8e8"></i><i style="left:691px;top:750px;width:8px;height:8px;background:#fbfbfb"></i><i style="left:699px;top:741px;width:8px;height:9px;background:#e4e4e4"></i><i style="left:699px;top:750px;width:8px;height:8px;background:#f6f6f6"></i><i style="left:707px;top:741px;width:8px;height:9px;background:#f0f0f0"></i><i style="left:707px;top:750px;width:8px;height:8px;background:#fbfbfb"></i><i style="left:715px;top:741px;width:8px;height:9px;background:#d5d5d5"></i><i style="left:715px;top:750px;width:8px;height:8px;background:#f7f7f7"></i><i style="left:723px;top:741px;width:8px;height:9px;background:#e5e5e5"></i><i style="left:723px;top:750px;width:8px;height:8px;background:#f7f7f7"></i><i style="left:731px;top:741px;width:8px;height:9px;background:#e5e5e5"></i><i style="left:731px;top:750px;width:8px;height:8px;background:#f7f7f7"></i><i style="left:635px;top:733px;width:8px;height:8px;background:#fcfcfc"></i><i style="left:667px;top:733px;width:8px;height:8px;background:#fcfcfc"></i><i style="left:675px;top:733px;width:8px;height:8px;background:#fcfcfc"></i><i style="left:691px;top:733px;width:8px;height:8px;background:#fcfcfc"></i><i style="left:699px;top:733px;width:8px;height:8px;background:#fcfcfc"></i><i style="left:605px;top:741px;width:6px;height:17px;background:#fcfcfc"></i><i style="left:605px;top:766px;width:200px;height:4px;background:#fbfbfb"></i></div></div><i style="left:77px;top:784px;width:8px;height:9px;background:#eaeaea"></i><i style="left:77px;top:793px;width:8px;height:8px;background:#f5f5f5"></i><i style="left:85px;top:784px;width:8px;height:9px;background:#dfdfdf"></i><i style="left:85px;top:793px;width:8px;height:8px;background:#f5f5f5"></i><i style="left:93px;top:784px;width:8px;height:9px;background:#eaeaea"></i><i style="left:93px;top:793px;width:8px;height:8px;background:#f5f5f5"></i><i style="left:101px;top:784px;width:8px;height:9px;background:#dedede"></i><i style="left:101px;top:793px;width:8px;height:8px;background:#f7f7f7"></i><i style="left:109px;top:784px;width:8px;height:9px;background:#ebebeb"></i><i style="left:109px;top:793px;width:8px;height:8px;background:#f0f0f0"></i><i style="left:117px;top:784px;width:8px;height:9px;background:#e3e3e3"></i><i style="left:117px;top:793px;width:8px;height:8px;background:#fafafa"></i><i style="left:125px;top:784px;width:8px;height:9px;background:#e6e6e6"></i><i style="left:125px;top:793px;width:8px;height:8px;background:#f8f8f8"></i><i style="left:133px;top:784px;width:8px;height:9px;background:#e4e4e4"></i><i style="left:133px;top:793px;width:8px;height:8px;background:#f8f8f8"></i><i style="left:141px;top:784px;width:8px;height:9px;background:#dcdcdc"></i><i style="left:141px;top:793px;width:8px;height:8px;background:#f5f5f5"></i><i style="left:149px;top:784px;width:8px;height:9px;background:#e2e2e2"></i><i style="left:149px;top:793px;width:8px;height:8px;background:#f5f5f5"></i><i style="left:157px;top:784px;width:8px;height:9px;background:#e8e8e8"></i><i style="left:157px;top:793px;width:8px;height:8px;background:#fbfbfb"></i><i style="left:165px;top:784px;width:8px;height:9px;background:#e4e4e4"></i><i style="left:165px;top:793px;width:8px;height:8px;background:#f6f6f6"></i><i style="left:173px;top:784px;width:8px;height:9px;background:#f0f0f0"></i><i style="left:173px;top:793px;width:8px;height:8px;background:#fbfbfb"></i><i style="left:181px;top:784px;width:8px;height:9px;background:#d5d5d5"></i><i style="left:181px;top:793px;width:8px;height:8px;background:#f7f7f7"></i><i style="left:189px;top:784px;width:8px;height:9px;background:#e5e5e5"></i><i style="left:189px;top:793px;width:8px;height:8px;background:#f7f7f7"></i><i style="left:197px;top:784px;width:8px;height:9px;background:#e5e5e5"></i><i style="left:197px;top:793px;width:8px;height:8px;background:#f7f7f7"></i><i style="left:205px;top:784px;width:8px;height:9px;background:#ebebeb"></i><i style="left:205px;top:793px;width:8px;height:8px;background:#f9f9f9"></i><i style="left:213px;top:784px;width:8px;height:9px;background:#dddddd"></i><i style="left:213px;top:793px;width:8px;height:8px;background:#f5f5f5"></i><i style="left:221px;top:784px;width:8px;height:9px;background:#e9e9e9"></i><i style="left:221px;top:793px;width:8px;height:8px;background:#f7f7f7"></i><i style="left:229px;top:784px;width:8px;height:9px;background:#e9e9e9"></i><i style="left:229px;top:793px;width:8px;height:8px;background:#f7f7f7"></i><i style="left:237px;top:784px;width:8px;height:9px;background:#e7e7e7"></i><i style="left:237px;top:793px;width:8px;height:8px;background:#f7f7f7"></i><i style="left:245px;top:784px;width:8px;height:9px;background:#e0e0e0"></i><i style="left:245px;top:793px;width:8px;height:8px;background:#f9f9f9"></i><i style="left:253px;top:784px;width:8px;height:9px;background:#ebebeb"></i><i style="left:253px;top:793px;width:8px;height:8px;background:#f9f9f9"></i><i style="left:101px;top:776px;width:8px;height:8px;background:#fcfcfc"></i><i style="left:133px;top:776px;width:8px;height:8px;background:#fcfcfc"></i><i style="left:141px;top:776px;width:8px;height:8px;background:#fcfcfc"></i><i style="left:157px;top:776px;width:8px;height:8px;background:#fcfcfc"></i><i style="left:165px;top:776px;width:8px;height:8px;background:#fcfcfc"></i><i style="left:71px;top:784px;width:6px;height:17px;background:#fcfcfc"></i><i style="left:71px;top:809px;width:203px;height:1px;background:#fbfbfb"></i><div style="position:absolute;left:350px;top:776px;width:128px;height:40px;overflow:hidden"><div style="position:absolute;left:-350px;top:-776px"><i style="left:358px;top:784px;width:8px;height:9px;background:#eaeaea"></i><i style="left:358px;top:793px;width:8px;height:8px;background:#f5f5f5"></i><i style="left:366px;top:784px;width:8px;height:9px;background:#dfdfdf"></i><i style="left:366px;top:793px;width:8px;height:8px;background:#f5f5f5"></i><i style="left:374px;top:784px;width:8px;height:9px;background:#eaeaea"></i><i style="left:374px;top:793px;width:8px;height:8px;background:#f5f5f5"></i><i style="left:382px;top:784px;width:8px;height:9px;background:#dedede"></i><i style="left:382px;top:793px;width:8px;height:8px;background:#f7f7f7"></i><i style="left:390px;top:784px;width:8px;height:9px;background:#ebebeb"></i><i style="left:390px;top:793px;width:8px;height:8px;background:#f0f0f0"></i><i style="left:398px;top:784px;width:8px;height:9px;background:#e3e3e3"></i><i style="left:398px;top:793px;width:8px;height:8px;background:#fafafa"></i><i style="left:406px;top:784px;width:8px;height:9px;background:#e6e6e6"></i><i style="left:406px;top:793px;width:8px;height:8px;background:#f8f8f8"></i><i style="left:414px;top:784px;width:8px;height:9px;background:#e4e4e4"></i><i style="left:414px;top:793px;width:8px;height:8px;background:#f8f8f8"></i><i style="left:422px;top:784px;width:8px;height:9px;background:#dcdcdc"></i><i style="left:422px;top:793px;width:8px;height:8px;background:#f5f5f5"></i><i style="left:430px;top:784px;width:8px;height:9px;background:#e2e2e2"></i><i style="left:430px;top:793px;width:8px;height:8px;background:#f5f5f5"></i><i style="left:438px;top:784px;width:8px;height:9px;background:#e8e8e8"></i><i style="left:438px;top:793px;width:8px;height:8px;background:#fbfbfb"></i><i style="left:446px;top:784px;width:8px;height:9px;background:#e4e4e4"></i><i style="left:446px;top:793px;width:8px;height:8px;background:#f6f6f6"></i><i style="left:454px;top:784px;width:8px;height:9px;background:#f0f0f0"></i><i style="left:454px;top:793px;width:8px;height:8px;background:#fbfbfb"></i><i style="left:462px;top:784px;width:8px;height:9px;background:#d5d5d5"></i><i style="left:462px;top:793px;width:8px;height:8px;background:#f7f7f7"></i><i style="left:470px;top:784px;width:8px;height:9px;background:#e5e5e5"></i><i style="left:470px;top:793px;width:8px;height:8px;background:#f7f7f7"></i><i style="left:478px;top:784px;width:8px;height:9px;background:#e5e5e5"></i><i style="left:478px;top:793px;width:8px;height:8px;background:#f7f7f7"></i><i style="left:382px;top:776px;width:8px;height:8px;background:#fcfcfc"></i><i style="left:414px;top:776px;width:8px;height:8px;background:#fcfcfc"></i><i style="left:422px;top:776px;width:8px;height:8px;background:#fcfcfc"></i><i style="left:438px;top:776px;width:8px;height:8px;background:#fcfcfc"></i><i style="left:446px;top:776px;width:8px;height:8px;background:#fcfcfc"></i><i style="left:352px;top:784px;width:6px;height:17px;background:#fcfcfc"></i><i style="left:352px;top:809px;width:200px;height:1px;background:#fbfbfb"></i></div></div><div style="position:absolute;left:608px;top:776px;width:118px;height:40px;overflow:hidden"><div style="position:absolute;left:-608px;top:-776px"><i style="left:606px;top:784px;width:8px;height:9px;background:#eaeaea"></i><i style="left:606px;top:793px;width:8px;height:8px;background:#f5f5f5"></i><i style="left:614px;top:784px;width:8px;height:9px;background:#dfdfdf"></i><i style="left:614px;top:793px;width:8px;height:8px;background:#f5f5f5"></i><i style="left:622px;top:784px;width:8px;height:9px;background:#eaeaea"></i><i style="left:622px;top:793px;width:8px;height:8px;background:#f5f5f5"></i><i style="left:630px;top:784px;width:8px;height:9px;background:#dedede"></i><i style="left:630px;top:793px;width:8px;height:8px;background:#f7f7f7"></i><i style="left:638px;top:784px;width:8px;height:9px;background:#ebebeb"></i><i style="left:638px;top:793px;width:8px;height:8px;background:#f0f0f0"></i><i style="left:646px;top:784px;width:8px;height:9px;background:#e3e3e3"></i><i style="left:646px;top:793px;width:8px;height:8px;background:#fafafa"></i><i style="left:654px;top:784px;width:8px;height:9px;background:#e6e6e6"></i><i style="left:654px;top:793px;width:8px;height:8px;background:#f8f8f8"></i><i style="left:662px;top:784px;width:8px;height:9px;background:#e4e4e4"></i><i style="left:662px;top:793px;width:8px;height:8px;background:#f8f8f8"></i><i style="left:670px;top:784px;width:8px;height:9px;background:#dcdcdc"></i><i style="left:670px;top:793px;width:8px;height:8px;background:#f5f5f5"></i><i style="left:678px;top:784px;width:8px;height:9px;background:#e2e2e2"></i><i style="left:678px;top:793px;width:8px;height:8px;background:#f5f5f5"></i><i style="left:686px;top:784px;width:8px;height:9px;background:#e8e8e8"></i><i style="left:686px;top:793px;width:8px;height:8px;background:#fbfbfb"></i><i style="left:694px;top:784px;width:8px;height:9px;background:#e4e4e4"></i><i style="left:694px;top:793px;width:8px;height:8px;background:#f6f6f6"></i><i style="left:702px;top:784px;width:8px;height:9px;background:#f0f0f0"></i><i style="left:702px;top:793px;width:8px;height:8px;background:#fbfbfb"></i><i style="left:710px;top:784px;width:8px;height:9px;background:#d5d5d5"></i><i style="left:710px;top:793px;width:8px;height:8px;background:#f7f7f7"></i><i style="left:718px;top:784px;width:8px;height:9px;background:#e5e5e5"></i><i style="left:718px;top:793px;width:8px;height:8px;background:#f7f7f7"></i><i style="left:726px;top:784px;width:8px;height:9px;background:#e5e5e5"></i><i style="left:726px;top:793px;width:8px;height:8px;background:#f7f7f7"></i><i style="left:630px;top:776px;width:8px;height:8px;background:#fcfcfc"></i><i style="left:662px;top:776px;width:8px;height:8px;background:#fcfcfc"></i><i style="left:670px;top:776px;width:8px;height:8px;background:#fcfcfc"></i><i style="left:686px;top:776px;width:8px;height:8px;background:#fcfcfc"></i><i style="left:694px;top:776px;width:8px;height:8px;background:#fcfcfc"></i><i style="left:600px;top:784px;width:6px;height:17px;background:#fcfcfc"></i><i style="left:600px;top:809px;width:200px;height:1px;background:#fbfbfb"></i></div></div><i style="left:348px;top:540px;width:1px;height:1px;background:#fff"></i><i style="left:348px;top:586px;width:1px;height:1px;background:#fff"></i><i style="left:348px;top:632px;width:1px;height:1px;background:#fff"></i>
<div class="pg"></div>
<i style="left:131px;top:815px;width:33px;height:50px;background:#d0d3de"></i>
<i style="left:131px;top:815px;width:33px;height:2px;background:#3442b0"></i>
<div class="a pn" style="left:131px">1</div>
<div class="a pn" style="left:164px">2</div>
<div class="a pn" style="left:196px">3</div>
<div class="a pn" style="left:229px">4</div>
<div class="a pn" style="left:261px">5</div>
<div class="a pn" style="left:294px">6</div>
<i style="left:404px;top:821px;width:65px;height:34px;background:#fff;border-radius:2px;box-shadow:0 1px 1px rgba(0,0,0,.12)"></i>
<div class="a" style="left:415px;top:829px;font-size:13px;color:#444">10</div>
<div class="a" style="left:476px;top:831px;font-size:13px;color:#444">items per page</div>
<div class="a" style="left:921px;top:831px;font-size:13px;color:#999">1 - 10 of 58 items</div>

<svg style="position:absolute;left:0;top:0" width="1076" height="858">
<g fill="#cdcdcd"><rect x="78" y="835" width="1.6" height="8"/><path d="M79.6 839 L85.4 835 V843 Z"/><path d="M112 839 L118 835 V843 Z"/></g>
<g fill="#a2a2a2"><path d="M339 835 V843 L345 839 Z"/><path d="M371 835 V843 L376.5 839 Z"/><rect x="376.6" y="835" width="1.5" height="8"/></g>
<path d="M449.5 834.5 H457.3 L453.4 839.8 Z" fill="#9a9a9a"/>
</svg>
</body></html>
